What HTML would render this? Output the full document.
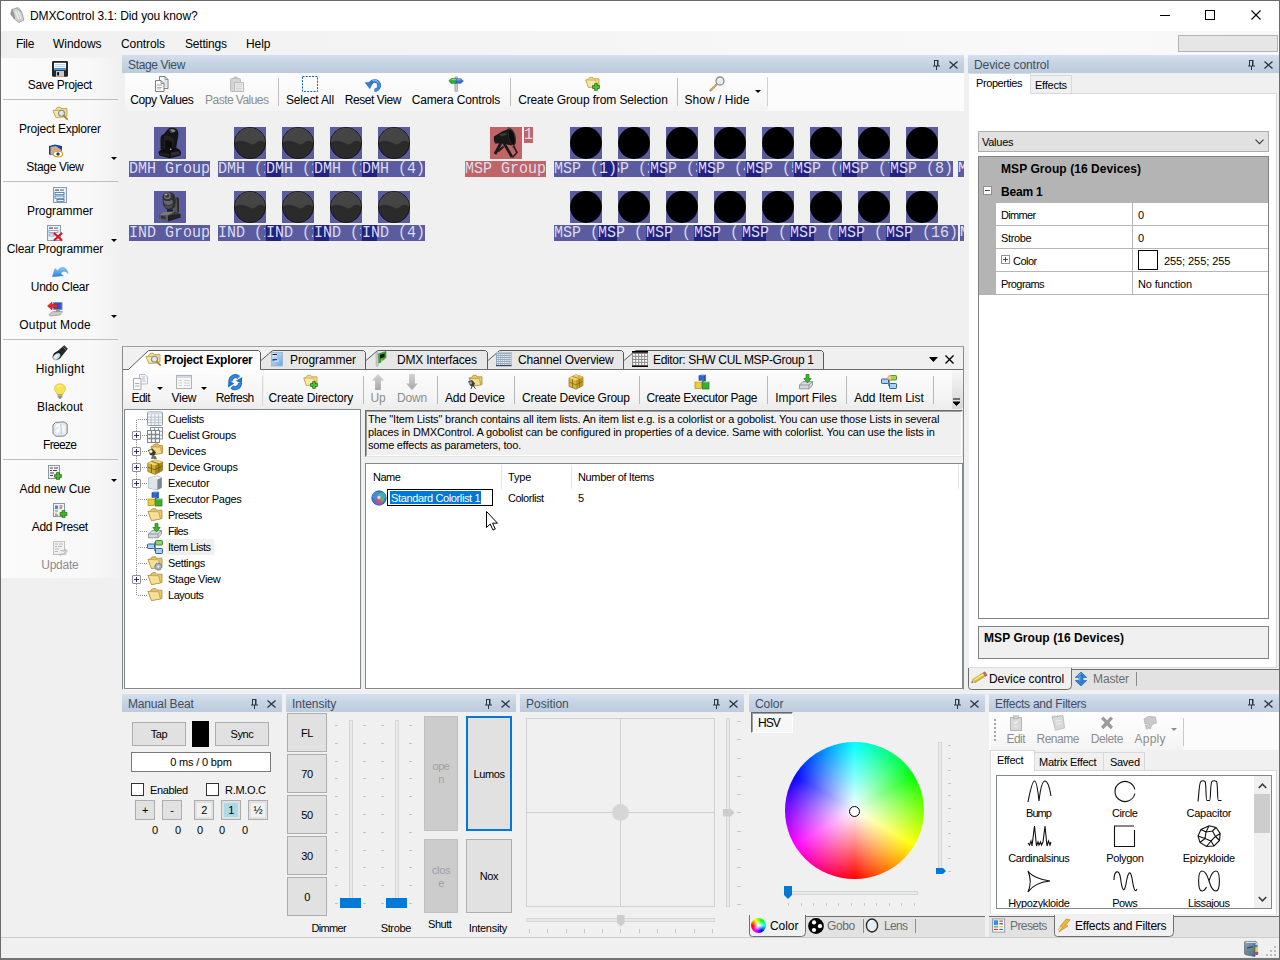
<!DOCTYPE html>
<html><head><meta charset="utf-8"><title>DMXControl 3.1: Did you know?</title>
<style>
*{box-sizing:border-box;margin:0;padding:0}
html,body{width:1280px;height:960px;overflow:hidden;background:#f0f0f0}
body{font-family:"Liberation Sans",sans-serif;font-size:12px;color:#000;position:relative}
.a{position:absolute}
svg{overflow:visible}
.t{position:absolute;white-space:nowrap;line-height:14px}
.ui{font-size:12px}
.ms{font-size:11px}
.ms.b{font-size:12px}
.c{text-align:center}
.b{font-weight:bold}
.dis{color:#8d8d8d}
.hdr{position:absolute;height:18px;background:linear-gradient(#d4e0ee,#c6d4e4 45%,#bccbdd)}
.dd{position:absolute;width:0;height:0;border-left:3px solid transparent;border-right:3px solid transparent;border-top:3px solid #000}
.btn{position:absolute;background:#e1e1e1;border:1px solid #adadad;text-align:center;font-size:11px;white-space:nowrap}
.lbl{position:absolute;height:16px;line-height:16px;text-align:center;color:#e6e6f2;font-family:"Liberation Mono",monospace;font-size:15px;white-space:pre;overflow:hidden;background:rgba(0,0,110,.62)}
.lbl{text-align:left}
.lbl span{display:block;transform:translateY(1.2px) scaleY(1.1);transform-origin:50% 60%;color:#dcdcf0}
</style></head><body>
<div class="a" style="left:0px;top:0px;width:1280px;height:960px;border:1px solid #6a6a6a;border-bottom:2px solid #747474;"></div>
<div class="a" style="left:1px;top:1px;width:1278px;height:30px;background:#fff"></div>
<svg class="a" style="left:9px;top:7px;" width="16" height="16" viewBox="0 0 16 16"><path d="M3 2.5 L7.5 1 L12.5 5 L15 13 L10 15.5 L5.5 12 Z" fill="#cfcfcf" stroke="#8b8b8b" stroke-width=".7"/><path d="M3 2.5 L5 8 L5.5 12 L1.5 7Z" fill="#9d9d9d" stroke="#777" stroke-width=".5"/><path d="M6.5 4 L9.5 12 M9 3.5 L12 11.5" stroke="#f3f3f3" stroke-width="1.2"/><path d="M7.5 1 L9.5 .8 L12.5 5" fill="none" stroke="#777" stroke-width=".7"/></svg>
<div class="t ui" style="left:30px;top:9px;letter-spacing:-0.112px;">DMXControl 3.1: Did you know?</div>
<div class="a" style="left:1160px;top:15px;width:10px;height:1px;background:#000"></div>
<div class="a" style="left:1205px;top:10px;width:10px;height:10px;border:1px solid #000"></div>
<svg class="a" style="left:1251px;top:10px" width="10" height="10" viewBox="0 0 10 10"><path d="M.5 .5 L9.5 9.5 M9.5 .5 L.5 9.5" stroke="#000" stroke-width="1.1" fill="none"/></svg>
<div class="a" style="left:1px;top:31px;width:1278px;height:27px;background:linear-gradient(90deg,#f0f0f0,#f2f2f2 15%,#f9f9f9 85%,#f7f7f7)"></div>
<div class="t ui" style="left:16px;top:37px;letter-spacing:-0.334px;">File</div>
<div class="t ui" style="left:53px;top:37px;letter-spacing:-0.025px;">Windows</div>
<div class="t ui" style="left:121px;top:37px;letter-spacing:-0.085px;">Controls</div>
<div class="t ui" style="left:185px;top:37px;letter-spacing:-0.201px;">Settings</div>
<div class="t ui" style="left:246px;top:37px;letter-spacing:-0.107px;">Help</div>
<div class="a" style="left:1178px;top:35px;width:100px;height:17px;background:#e6e6e6;border:1px solid #b4b4b4"></div>
<div class="a" style="left:1px;top:58px;width:119px;height:520px;background:linear-gradient(90deg,#fbfbfb,#f8f8f8 75%,#f1f1f1)"></div>
<svg class="a" style="left:52px;top:61px;" width="16" height="16" viewBox="0 0 16 16"><rect x="0" y="0" width="16" height="15.7" rx="1.3" fill="#262626"/><rect x="2" y="1.8" width="12" height="5.4" fill="#fff"/><rect x="3" y="3.2" width="10" height="1" fill="#a9cdee"/><rect x="3" y="5.2" width="10" height="1" fill="#a9cdee"/><rect x="2" y="7.2" width="12" height="2" fill="#4d9fe4"/><rect x="4" y="10" width="8" height="5.7" fill="#c9c9c9"/><rect x="5.2" y="11.2" width="1.8" height="3.2" fill="#000"/></svg>
<div class="t ui c" style="left:-40.17px;width:200px;top:78px;letter-spacing:-0.336px;">Save Project</div>
<svg class="a" style="left:52px;top:105px;" width="16" height="16" viewBox="0 0 16 16"><path d="M1 5.5 L3.5 5 L5 2.5 L8 2 L9 3.5 L15 3.5 L15 11 L4 12.5 Z" fill="#f0d98a" stroke="#b79a45" stroke-width=".8"/><path d="M1 5.5 L11 5.5 L13 12 L4 12.5Z" fill="#f6e6a4" stroke="#b79a45" stroke-width=".6"/><circle cx="9.5" cy="8.3" r="3" fill="#dbe9f4" stroke="#8a8a8a" stroke-width="1.1"/><path d="M11.8 10.8 L15.2 14.2" stroke="#b08236" stroke-width="1.8" stroke-linecap="round"/></svg>
<div class="t ui c" style="left:-40.12px;width:200px;top:122px;letter-spacing:-0.235px;">Project Explorer</div>
<svg class="a" style="left:47px;top:143px;" width="16" height="16" viewBox="0 0 16 16"><path d="M2 3 L8 1.5 L15 3 L15 11 L9 13 L2 11Z" fill="#1c3f9e"/><path d="M3 4 L9 3 L14.5 7 L14.5 11 L9 12.5 L3 11Z" fill="#c7ae9b"/><path d="M2 3 L3.5 4 L3.5 12.5 L2 11Z" fill="#3a3a46"/><ellipse cx="11" cy="11" rx="4.6" ry="2.9" fill="#fff" stroke="#e5a21f" stroke-width="1.2"/><circle cx="11" cy="11" r="1.7" fill="#2a4f8f"/><circle cx="11" cy="11" r=".8" fill="#111"/></svg>
<div class="t ui c" style="left:-45.17px;width:200px;top:160px;letter-spacing:-0.349px;">Stage View</div>
<div class="dd" style="left:111px;top:157px;border-top-color:#000"></div>
<svg class="a" style="left:52px;top:187px;" width="16" height="16" viewBox="0 0 16 16"><rect x="1.5" y=".5" width="13" height="15" fill="#e8f2fc" stroke="#8e9aa8"/><rect x="3" y="2.5" width="4" height="1.2" fill="#555"/><rect x="8" y="2.5" width="4" height="1.2" fill="#777"/><rect x="3" y="5.5" width="9" height="2.2" fill="#fff" stroke="#3b6ea5" stroke-width=".8"/><rect x="3" y="9" width="9" height="2.2" fill="#fff" stroke="#3b6ea5" stroke-width=".8"/><rect x="5" y="12.5" width="7" height="1.8" fill="#fff" stroke="#3b6ea5" stroke-width=".8"/></svg>
<div class="t ui c" style="left:-40.03px;width:200px;top:204px;letter-spacing:-0.068px;">Programmer</div>
<svg class="a" style="left:47px;top:225px;" width="16" height="16" viewBox="0 0 16 16"><rect x=".5" y=".5" width="13" height="15" fill="#e8f2fc" stroke="#8e9aa8"/><rect x="2" y="2.5" width="4" height="1.2" fill="#555"/><rect x="7" y="2.5" width="4" height="1.2" fill="#777"/><rect x="2" y="5.5" width="9" height="2" fill="#fff" stroke="#6f8eb0" stroke-width=".7"/><rect x="2" y="9" width="5" height="2" fill="#fff" stroke="#6f8eb0" stroke-width=".7"/><path d="M7.5 8.5 L14.5 15 M14.5 8.5 L7.5 15" stroke="#e0141c" stroke-width="2.2" stroke-linecap="round"/></svg>
<div class="t ui c" style="left:-45.08px;width:200px;top:242px;letter-spacing:-0.156px;">Clear Programmer</div>
<div class="dd" style="left:111px;top:239px;border-top-color:#000"></div>
<svg class="a" style="left:52px;top:263px;" width="16" height="16" viewBox="0 0 16 16"><defs><linearGradient id="undg" x1="0" y1="0" x2="0" y2="1"><stop offset="0" stop-color="#8cc8f6"/><stop offset="1" stop-color="#2c7fd2"/></linearGradient></defs><path d="M.3 13.8 L3 5.6 L5.6 7.8 C8.5 3.2 14.2 2.6 16 10.5 C13.5 7.2 10.8 7.8 8.8 10.6 L11.4 12.8 Z" fill="url(#undg)" stroke="#4a96dc" stroke-width=".5"/></svg>
<div class="t ui c" style="left:-40.12px;width:200px;top:280px;letter-spacing:-0.240px;">Undo Clear</div>
<svg class="a" style="left:47px;top:301px;" width="16" height="16" viewBox="0 0 16 16"><rect x="6" y="1" width="9.5" height="8" rx=".8" fill="#8e8e8e"/><rect x="7" y="2" width="7.5" height="6" fill="#2458d6"/><path d="M9 9 L13 9 L13.5 11 L8.5 11Z" fill="#9a9a9a"/><path d="M2 13.5 L6 10.5 L15.5 10.5 L13 14 L3 15Z" fill="#c9c9c9" stroke="#8a8a8a" stroke-width=".6"/><path d="M.5 5 L5 1 L5 3.2 L10.5 3.2 L10.5 6.8 L5 6.8 L5 9Z" fill="#e3262c" stroke="#a3151a" stroke-width=".5"/></svg>
<div class="t ui c" style="left:-44.89px;width:200px;top:318px;letter-spacing:0.211px;">Output Mode</div>
<div class="dd" style="left:111px;top:315px;border-top-color:#000"></div>
<svg class="a" style="left:52px;top:345px;" width="16" height="16" viewBox="0 0 16 16"><path d="M5 6.5 L12.3 .3 L15.8 3.8 L10 11Z" fill="#262626"/><path d="M12.8 1.2 L15 3.4 M11.4 2.4 L13.8 4.8" stroke="#8a8a8a" stroke-width=".9"/><path d="M7.2 5.4 L11 9.2" stroke="#555" stroke-width=".8"/><ellipse cx="5.4" cy="10.6" rx="5.4" ry="3.9" transform="rotate(-40 5.4 10.6)" fill="#1e1e1e"/><ellipse cx="4.7" cy="11.4" rx="4.1" ry="2.6" transform="rotate(-40 4.7 11.4)" fill="#c5ddee"/><ellipse cx="4" cy="11.4" rx="2" ry="1.2" transform="rotate(-40 4 11.4)" fill="#eef6fb"/></svg>
<div class="t ui c" style="left:-39.87px;width:200px;top:362px;letter-spacing:0.257px;">Highlight</div>
<svg class="a" style="left:52px;top:383px;" width="16" height="16" viewBox="0 0 16 16"><path d="M8 .8 C4.6 .8 2.6 3.2 2.6 5.8 C2.6 8.2 4.6 9.4 5.4 11.4 L10.6 11.4 C11.4 9.4 13.4 8.2 13.4 5.8 C13.4 3.2 11.4 .8 8 .8Z" fill="#f5e34d" stroke="#d9be2a" stroke-width=".7"/><path d="M5.5 4 C6.5 2.8 8.5 2.6 9.5 3.4" stroke="#fdf6b8" stroke-width="1.3" fill="none"/><rect x="5.6" y="11.4" width="4.8" height="3" fill="#8d8d8d"/><rect x="5.6" y="12.4" width="4.8" height=".8" fill="#c4c4c4"/><path d="M6.4 14.4 L9.6 14.4 L8.8 15.6 L7.2 15.6Z" fill="#444"/></svg>
<div class="t ui c" style="left:-40.01px;width:200px;top:400px;letter-spacing:-0.028px;">Blackout</div>
<svg class="a" style="left:52px;top:421px;" width="16" height="16" viewBox="0 0 16 16"><path d="M3.5 1.5 L12 .8 L15.2 3 L15.2 12 L12.5 15 L4 15.3 L1 12.5 L1 4Z" fill="#dfe7ec" stroke="#7b848b" stroke-width="1"/><path d="M4 3.5 L8 2.5 L9 9 L5 13 L3 10Z" fill="#f7fafc"/><path d="M10 4 L13 4.5 L13.5 11 L10.5 12.5Z" fill="#f3f7fa"/><path d="M8.5 3 L9.5 13 M3 9 L6.5 6" stroke="#b4c0c8" stroke-width=".7" fill="none"/></svg>
<div class="t ui c" style="left:-40.35px;width:200px;top:438px;letter-spacing:-0.691px;">Freeze</div>
<svg class="a" style="left:47px;top:465px;" width="16" height="16" viewBox="0 0 16 16"><rect x="1.5" y=".5" width="11" height="13" fill="#f4f4f4" stroke="#8a96a3"/><path d="M3 3h3M7 3h4M3 5.5h2M6 5.5h4M3 8h4M3 10.5h3" stroke="#444" stroke-width="1"/><path d="M11 7.2 v7.6 M7.2 11 h7.6" stroke="#1c6b12" stroke-width="3.6"/><path d="M11 7.8 v6.4 M7.8 11 h6.4" stroke="#46b42c" stroke-width="2.2"/></svg>
<div class="t ui c" style="left:-45.06px;width:200px;top:482px;letter-spacing:-0.113px;">Add new Cue</div>
<div class="dd" style="left:111px;top:479px;border-top-color:#000"></div>
<svg class="a" style="left:52px;top:503px;" width="16" height="16" viewBox="0 0 16 16"><rect x="1.5" y=".5" width="11" height="13" fill="#f4f4f4" stroke="#8a96a3"/><rect x="3" y="2.5" width="3" height="3.6" fill="#3c8fe6"/><path d="M7.5 3h3" stroke="#d33" stroke-width="1"/><path d="M7.5 5h2.5" stroke="#444" stroke-width="1"/><path d="M3 8h3" stroke="#3a3" stroke-width="1"/><path d="M3 10h2" stroke="#cc3" stroke-width="1"/><path d="M3 12h3" stroke="#d33" stroke-width="1"/><path d="M11.5 7.2 v7.6 M7.7 11 h7.6" stroke="#1c6b12" stroke-width="3.6"/><path d="M11.5 7.8 v6.4 M8.3 11 h6.4" stroke="#46b42c" stroke-width="2.2"/></svg>
<div class="t ui c" style="left:-40.17px;width:200px;top:520px;letter-spacing:-0.337px;">Add Preset</div>
<svg class="a" style="left:52px;top:541px;" width="16" height="16" viewBox="0 0 16 16"><rect x="1.5" y=".5" width="11" height="13" fill="#f1f1f1" stroke="#c0c0c0"/><path d="M3 3h3M7 3h4M3 5.5h2M6 5.5h4M3 8h4M3 10.5h3" stroke="#b5b5b5" stroke-width="1"/><path d="M8 9.5 L13.5 9.5 L13.5 8 L15.5 10 L13.5 12 M15 13 L8.5 13 L8.5 14.8 L7 12.8" fill="#d6d6d6" stroke="#bdbdbd" stroke-width="1"/></svg>
<div class="t ui c" style="left:-40.12px;width:200px;top:558px;letter-spacing:-0.232px;color:#8d8d8d">Update</div>
<div class="a" style="left:3px;top:99px;width:115px;height:1px;background:#bdbdbd"></div>
<div class="a" style="left:3px;top:181px;width:115px;height:1px;background:#bdbdbd"></div>
<div class="a" style="left:3px;top:339px;width:115px;height:1px;background:#bdbdbd"></div>
<div class="a" style="left:3px;top:459px;width:115px;height:1px;background:#bdbdbd"></div>
<div class="hdr" style="left:122px;top:55px;width:842px"></div><div class="t ui" style="left:128px;top:58px;letter-spacing:-0.349px;color:#3e4d60">Stage View</div><svg class="a" style="left:933px;top:60px" width="7" height="10" viewBox="0 0 7 10"><path d="M1.5 0 V6 M4.5 0 V6 M1 .5 H5 M0 6 H7 M3.5 6 V10" stroke="#2d3640" stroke-width="1" fill="none"/><path d="M4 0 H5.5 V6 H4Z" fill="#2d3640"/></svg><svg class="a" style="left:949px;top:61px" width="9" height="8" viewBox="0 0 9 8"><path d="M.5 .5 L8.5 7.5 M8.5 .5 L.5 7.5" stroke="#2d3640" stroke-width="1.3" fill="none"/></svg>
<div class="a" style="left:125px;top:73px;width:839px;height:38px;background:#fcfcfc;border-radius:2px 0 0 0"></div>
<div class="a" style="left:125px;top:73px;width:643px;height:38px;background:linear-gradient(#fdfdfd,#f9f9f9 60%,#f3f3f3);border-radius:2px 0 3px 0"></div>
<svg class="a" style="left:154px;top:76px;" width="16" height="16" viewBox="0 0 16 16"><path d="M5.5 .5 h5.5 l3 3 v9 h-8.5z" fill="#f4f7fa" stroke="#7e7e7e"/><path d="M11 .5 v3 h3" fill="none" stroke="#7e7e7e" stroke-width=".8"/><path d="M9.5 4h3M9.5 6h3.5M10.5 8h2.5M10.5 10h2.5" stroke="#b9c6d6" stroke-width=".8"/><path d="M1.5 4.5 h5.5 l3 3 v8 h-8.5z" fill="#fcfcfc" stroke="#7e7e7e"/><path d="M7 4.5 v3 h3" fill="none" stroke="#7e7e7e" stroke-width=".8"/><path d="M3 9h5" stroke="#8a8a8a" stroke-width=".8"/><path d="M3 11.5h5M3 13h4" stroke="#b5b5b5" stroke-width="1"/></svg>
<div class="t ui c" style="left:61.82px;width:200px;top:93px;letter-spacing:-0.354px;">Copy Values</div>
<svg class="a" style="left:229px;top:76px;" width="16" height="16" viewBox="0 0 16 16"><rect x="1.5" y="2.5" width="10" height="13" rx="1" fill="#d4d4d4" stroke="#bcbcbc"/><path d="M4 2.8 C4 1 5.5 .6 6.5 .6 C7.5 .6 9 1 9 2.8Z" fill="#c4c4c4"/><rect x="5.5" y="6.5" width="9" height="9" fill="#e9e9e9" stroke="#bdbdbd"/><path d="M7 8.5h6M7 10.5h6M7 12.5h6M7 14h6" stroke="#cfcfcf" stroke-width=".8"/></svg>
<div class="t ui c" style="left:136.73px;width:200px;top:93px;letter-spacing:-0.548px;color:#8d8d8d">Paste Values</div>
<svg class="a" style="left:302px;top:76px;" width="16" height="16" viewBox="0 0 16 16"><rect x=".5" y=".5" width="15" height="15" fill="none" stroke="#1b5fb0" stroke-width="1" stroke-dasharray="2 1.2"/></svg>
<div class="t ui c" style="left:209.93px;width:200px;top:93px;letter-spacing:-0.136px;">Select All</div>
<svg class="a" style="left:365px;top:76px;" width="16" height="16" viewBox="0 0 16 16"><path d="M5.2 8.2 A4.6 4.6 0 1 1 9.6 14.2" fill="none" stroke="#1d62b8" stroke-width="3.6"/><path d="M5.2 8.2 A4.6 4.6 0 1 1 9.6 14.2" fill="none" stroke="#3f8fe2" stroke-width="2.4"/><path d="M7.5 4.4 A4 4 0 0 1 13.2 7" fill="none" stroke="#9ccbf5" stroke-width="1"/><path d="M.3 6.8 L8 6.2 L4.8 12.6Z" fill="#2f7fd8" stroke="#1d62b8" stroke-width=".6"/></svg>
<div class="t ui c" style="left:272.79px;width:200px;top:93px;letter-spacing:-0.422px;">Reset View</div>
<svg class="a" style="left:448px;top:76px;" width="16" height="16" viewBox="0 0 16 16"><rect x="6.9" y=".8" width="2.6" height="14.8" rx=".8" fill="#c9c9c9" stroke="#8a8a8a" stroke-width=".6"/><path d="M.8 5 L3 2.6 L8.3 2.6 L8.3 7.4 L3 7.4Z" fill="#2fae38" stroke="#1b8a24" stroke-width=".6"/><path d="M8.3 2.8 L13 2.8 L15.4 5 L13 7.2 L8.3 7.2Z" fill="#3a6fd8" stroke="#2450a8" stroke-width=".6"/><path d="M3.2 3.6 H8 M8.6 3.8 H12.8" stroke="#9fe3a5" stroke-width=".8"/></svg>
<div class="t ui c" style="left:355.93px;width:200px;top:93px;letter-spacing:-0.146px;">Camera Controls</div>
<svg class="a" style="left:585px;top:76px;" width="16" height="16" viewBox="0 0 16 16"><path d="M.8 4 L3 3.6 L4.5 1.5 L7.5 1.2 L8.5 2.8 L14 2.8 L14 10 L3.5 11.5 Z" fill="#f0d98a" stroke="#b79a45" stroke-width=".8"/><path d="M.8 4 L10.5 4.2 L12.5 10.5 L3.5 11.5Z" fill="#f7e8a8" stroke="#b79a45" stroke-width=".6"/><path d="M11 7.2 v7.6 M7.2 11 h7.6" stroke="#1c6b12" stroke-width="3.4"/><path d="M11 7.9 v6.2 M7.9 11 h6.2" stroke="#49c02d" stroke-width="2"/></svg>
<div class="t ui c" style="left:492.94px;width:200px;top:93px;letter-spacing:-0.116px;">Create Group from Selection</div>
<svg class="a" style="left:709px;top:76px;" width="16" height="16" viewBox="0 0 16 16"><path d="M1.5 14.5 L8 8" stroke="#b98b4e" stroke-width="2.2" stroke-linecap="round"/><path d="M1.8 14.2 L8 8" stroke="#e1bc82" stroke-width=".8" stroke-linecap="round"/><circle cx="11" cy="5" r="4" fill="#e4ecf2" stroke="#8d8d8d" stroke-width="1.3"/><path d="M8.8 4 C9.5 2.6 11 2.2 12.5 2.8" stroke="#fff" stroke-width="1" fill="none"/></svg>
<div class="t ui c" style="left:617.01px;width:200px;top:93px;letter-spacing:0.027px;">Show / Hide</div>
<div class="a" style="left:278px;top:78px;width:1px;height:28px;background:#bdbdbd"></div>
<div class="a" style="left:510px;top:78px;width:1px;height:28px;background:#bdbdbd"></div>
<div class="a" style="left:677px;top:78px;width:1px;height:28px;background:#bdbdbd"></div>
<div class="a" style="left:767px;top:77px;width:1px;height:29px;background:#d0d0d0"></div>
<div class="dd" style="left:755px;top:90px;border-top-color:#000"></div>
<svg class="a" style="left:154px;top:127px" width="32" height="32" viewBox="0 0 32 32"><rect width="32" height="32" fill="#5b5b9f"/><path d="M6.5 22 L6.5 12 C6.5 9 8 7.5 10 7 L14 2 C16 .3 21 .3 23 2.5 C25 5 24.5 10 23.5 13 L22.5 19 L22 23 Z" fill="#141414"/><path d="M14.5 2.5 C17 1.2 20.5 1.5 22 3.5 C21 5.5 18 6.5 16.5 6 Z" fill="#3c3c3c"/><ellipse cx="18.8" cy="3.6" rx="2.2" ry="1.2" transform="rotate(20 18.8 3.6)" fill="#8c8c8c"/><path d="M10 9 C13 7.5 18 9 20 13 L19.5 20 L9.5 21Z" fill="#222"/><path d="M11 14 C13 12 17 13 18.5 16 L18 20.5 L11.5 21Z" fill="#0c0c0c"/><path d="M4.5 25 L7 22.5 L11 21.5 L22 21 L25.5 22.5 L27 25 L26.5 28.5 L17 31 L15.5 31.2 L5.5 28.5Z" fill="#0f0f0f"/><path d="M17 25.5 L25.5 24 L25.5 27.5 L17 29.5Z" fill="#2c2c34"/><path d="M6 25.3 L15.5 27 L15.5 30 L6 27.8Z" fill="#1e1e1e"/><circle cx="16.8" cy="22.3" r=".7" fill="#d0d0d0"/></svg>
<div class="lbl" style="left:129px;top:161px;width:81px;"><span style="">DMH Group</span></div>
<svg class="a" style="left:154px;top:191px" width="32" height="32" viewBox="0 0 32 32"><rect width="32" height="32" fill="#5b5b9f"/><path d="M20 7 L24 6 L25 8 L25 21 L21 23 L19.5 21Z" fill="#55565a"/><path d="M22.5 6.5 L24 6 L25 8 L25 21 L23.5 21.8Z" fill="#2a2a2c"/><path d="M8.5 6 C8.5 3 11 1 14 1 C17.5 1 20 2.5 21 5 L22 10 L21 16 L17.5 18.5 L12 18 L9 14Z" fill="#2f2f31"/><circle cx="13.3" cy="4.8" r="3.5" fill="#6f7074"/><circle cx="13" cy="4.5" r="2.3" fill="#3a3340"/><ellipse cx="12.2" cy="3.6" rx="1.3" ry=".9" fill="#b89ac6"/><path d="M9.5 8.5 C11.5 10.5 15.5 10.5 18 8.5 L19 12 C16 14.5 12 14.5 10 12Z" fill="#66676b"/><path d="M10.5 13 C12.5 15 16 15 18.5 13 L18 16.5 C16 18 13 18 11.5 16.5Z" fill="#4a4b4f"/><path d="M13 18 L19 18.5 L19 21 L13 21Z" fill="#1d1d1f"/><path d="M5.5 24 L9 21 L21 20.5 L26.5 23 L26.5 26.5 L14 30.5 L5.5 27.5Z" fill="#3a3b3e"/><path d="M5.5 24 L9 21 L21 20.5 L14 24.5Z" fill="#77787c"/><path d="M5.5 24 L14 24.5 L14 30.5 L5.5 27.5Z" fill="#5a5b5f"/><path d="M7 25 L11.5 25.4 L11.5 28.3 L7 27Z" fill="#2b2f2b"/><path d="M14 24.5 L26.5 23 L26.5 26.5 L14 30.5Z" fill="#232325"/></svg>
<div class="lbl" style="left:129px;top:225px;width:81px;"><span style="">IND Group</span></div>
<svg class="a" style="left:234px;top:127px" width="32" height="32" viewBox="0 0 32 32"><rect width="32" height="32" fill="#5b5b9f"/><circle cx="16" cy="16" r="15.6" fill="#2b2b2b" stroke="#0e0e0e" stroke-width=".8"/><path d="M.8 16 A15.2 15.2 0 0 1 31.2 16 C29 13.5 26 13 23.5 14.5 C21.5 16 19.5 18.5 17 17 C14.5 15.5 13 15.5 10.5 14.5 C7 13 3.5 13.5 .8 16Z" fill="#454545"/></svg>
<svg class="a" style="left:234px;top:191px" width="32" height="32" viewBox="0 0 32 32"><rect width="32" height="32" fill="#5b5b9f"/><circle cx="16" cy="16" r="15.6" fill="#2b2b2b" stroke="#0e0e0e" stroke-width=".8"/><path d="M.8 16 A15.2 15.2 0 0 1 31.2 16 C29 13.5 26 13 23.5 14.5 C21.5 16 19.5 18.5 17 17 C14.5 15.5 13 15.5 10.5 14.5 C7 13 3.5 13.5 .8 16Z" fill="#454545"/></svg>
<svg class="a" style="left:282px;top:127px" width="32" height="32" viewBox="0 0 32 32"><rect width="32" height="32" fill="#5b5b9f"/><circle cx="16" cy="16" r="15.6" fill="#2b2b2b" stroke="#0e0e0e" stroke-width=".8"/><path d="M.8 16 A15.2 15.2 0 0 1 31.2 16 C29 13.5 26 13 23.5 14.5 C21.5 16 19.5 18.5 17 17 C14.5 15.5 13 15.5 10.5 14.5 C7 13 3.5 13.5 .8 16Z" fill="#454545"/></svg>
<svg class="a" style="left:282px;top:191px" width="32" height="32" viewBox="0 0 32 32"><rect width="32" height="32" fill="#5b5b9f"/><circle cx="16" cy="16" r="15.6" fill="#2b2b2b" stroke="#0e0e0e" stroke-width=".8"/><path d="M.8 16 A15.2 15.2 0 0 1 31.2 16 C29 13.5 26 13 23.5 14.5 C21.5 16 19.5 18.5 17 17 C14.5 15.5 13 15.5 10.5 14.5 C7 13 3.5 13.5 .8 16Z" fill="#454545"/></svg>
<svg class="a" style="left:330px;top:127px" width="32" height="32" viewBox="0 0 32 32"><rect width="32" height="32" fill="#5b5b9f"/><circle cx="16" cy="16" r="15.6" fill="#2b2b2b" stroke="#0e0e0e" stroke-width=".8"/><path d="M.8 16 A15.2 15.2 0 0 1 31.2 16 C29 13.5 26 13 23.5 14.5 C21.5 16 19.5 18.5 17 17 C14.5 15.5 13 15.5 10.5 14.5 C7 13 3.5 13.5 .8 16Z" fill="#454545"/></svg>
<svg class="a" style="left:330px;top:191px" width="32" height="32" viewBox="0 0 32 32"><rect width="32" height="32" fill="#5b5b9f"/><circle cx="16" cy="16" r="15.6" fill="#2b2b2b" stroke="#0e0e0e" stroke-width=".8"/><path d="M.8 16 A15.2 15.2 0 0 1 31.2 16 C29 13.5 26 13 23.5 14.5 C21.5 16 19.5 18.5 17 17 C14.5 15.5 13 15.5 10.5 14.5 C7 13 3.5 13.5 .8 16Z" fill="#454545"/></svg>
<svg class="a" style="left:378px;top:127px" width="32" height="32" viewBox="0 0 32 32"><rect width="32" height="32" fill="#5b5b9f"/><circle cx="16" cy="16" r="15.6" fill="#2b2b2b" stroke="#0e0e0e" stroke-width=".8"/><path d="M.8 16 A15.2 15.2 0 0 1 31.2 16 C29 13.5 26 13 23.5 14.5 C21.5 16 19.5 18.5 17 17 C14.5 15.5 13 15.5 10.5 14.5 C7 13 3.5 13.5 .8 16Z" fill="#454545"/></svg>
<svg class="a" style="left:378px;top:191px" width="32" height="32" viewBox="0 0 32 32"><rect width="32" height="32" fill="#5b5b9f"/><circle cx="16" cy="16" r="15.6" fill="#2b2b2b" stroke="#0e0e0e" stroke-width=".8"/><path d="M.8 16 A15.2 15.2 0 0 1 31.2 16 C29 13.5 26 13 23.5 14.5 C21.5 16 19.5 18.5 17 17 C14.5 15.5 13 15.5 10.5 14.5 C7 13 3.5 13.5 .8 16Z" fill="#454545"/></svg>
<div class="lbl" style="left:218px;top:161px;width:63px;"><span style="width:47px;overflow:hidden;">DMH (1)</span></div>
<div class="lbl" style="left:218px;top:225px;width:63px;"><span style="width:47px;overflow:hidden;">IND (1)</span></div>
<div class="lbl" style="left:266px;top:161px;width:63px;"><span style="width:47px;overflow:hidden;">DMH (2)</span></div>
<div class="lbl" style="left:266px;top:225px;width:63px;"><span style="width:47px;overflow:hidden;">IND (2)</span></div>
<div class="lbl" style="left:314px;top:161px;width:63px;"><span style="width:47px;overflow:hidden;">DMH (3)</span></div>
<div class="lbl" style="left:314px;top:225px;width:63px;"><span style="width:47px;overflow:hidden;">IND (3)</span></div>
<div class="lbl" style="left:362px;top:161px;width:63px;"><span style="">DMH (4)</span></div>
<div class="lbl" style="left:362px;top:225px;width:63px;"><span style="">IND (4)</span></div>
<svg class="a" style="left:490px;top:127px" width="32" height="32" viewBox="0 0 32 32"><rect width="32" height="32" fill="#c06468"/><path d="M17.5 .8 C20.5 .5 24.5 4 25.2 10 C25.8 15 24.5 19.5 22.5 20.5" fill="none" stroke="#3c3c3c" stroke-width="1.2"/><path d="M4 9.5 L12 4.5 L18.5 2 C22 3 24.5 7 24.5 11.5 C24.5 15 23.5 17.5 21.5 18.5 L12.5 16.5 L5 16.5 C3.8 14 3.6 11.5 4 9.5Z" fill="#181818"/><path d="M10 7 L16.5 5.5 L16.5 8 L10 9.5Z" fill="#3a3a3a"/><ellipse cx="21.8" cy="10.3" rx="3" ry="8" transform="rotate(-14 21.8 10.3)" fill="#0c0c0c" stroke="#2e2e2e" stroke-width=".8"/><path d="M11.5 15 L5 27" stroke="#1a1a1a" stroke-width="2.8"/><path d="M8 24.5 L13.5 19.5" stroke="#1a1a1a" stroke-width="2"/><path d="M13.5 15.5 L22 30" stroke="#1a1a1a" stroke-width="2.8"/><path d="M23.5 19 L27 25.5 L22.5 30.5" fill="none" stroke="#222" stroke-width="1.6"/></svg>
<div class="lbl" style="left:465px;top:161px;width:81px;background:#c06468;"><span style="">MSP Group</span></div>
<div class="lbl" style="left:524px;top:127px;width:9px;background:#c06468"><span>1</span></div>
<svg class="a" style="left:570px;top:127px" width="32" height="32" viewBox="0 0 32 32"><rect width="32" height="32" fill="#5b5b9f"/><circle cx="16" cy="16" r="15.9" fill="#000"/></svg>
<svg class="a" style="left:570px;top:191px" width="32" height="32" viewBox="0 0 32 32"><rect width="32" height="32" fill="#5b5b9f"/><circle cx="16" cy="16" r="15.9" fill="#000"/></svg>
<svg class="a" style="left:618px;top:127px" width="32" height="32" viewBox="0 0 32 32"><rect width="32" height="32" fill="#5b5b9f"/><circle cx="16" cy="16" r="15.9" fill="#000"/></svg>
<svg class="a" style="left:618px;top:191px" width="32" height="32" viewBox="0 0 32 32"><rect width="32" height="32" fill="#5b5b9f"/><circle cx="16" cy="16" r="15.9" fill="#000"/></svg>
<svg class="a" style="left:666px;top:127px" width="32" height="32" viewBox="0 0 32 32"><rect width="32" height="32" fill="#5b5b9f"/><circle cx="16" cy="16" r="15.9" fill="#000"/></svg>
<svg class="a" style="left:666px;top:191px" width="32" height="32" viewBox="0 0 32 32"><rect width="32" height="32" fill="#5b5b9f"/><circle cx="16" cy="16" r="15.9" fill="#000"/></svg>
<svg class="a" style="left:714px;top:127px" width="32" height="32" viewBox="0 0 32 32"><rect width="32" height="32" fill="#5b5b9f"/><circle cx="16" cy="16" r="15.9" fill="#000"/></svg>
<svg class="a" style="left:714px;top:191px" width="32" height="32" viewBox="0 0 32 32"><rect width="32" height="32" fill="#5b5b9f"/><circle cx="16" cy="16" r="15.9" fill="#000"/></svg>
<svg class="a" style="left:762px;top:127px" width="32" height="32" viewBox="0 0 32 32"><rect width="32" height="32" fill="#5b5b9f"/><circle cx="16" cy="16" r="15.9" fill="#000"/></svg>
<svg class="a" style="left:762px;top:191px" width="32" height="32" viewBox="0 0 32 32"><rect width="32" height="32" fill="#5b5b9f"/><circle cx="16" cy="16" r="15.9" fill="#000"/></svg>
<svg class="a" style="left:810px;top:127px" width="32" height="32" viewBox="0 0 32 32"><rect width="32" height="32" fill="#5b5b9f"/><circle cx="16" cy="16" r="15.9" fill="#000"/></svg>
<svg class="a" style="left:810px;top:191px" width="32" height="32" viewBox="0 0 32 32"><rect width="32" height="32" fill="#5b5b9f"/><circle cx="16" cy="16" r="15.9" fill="#000"/></svg>
<svg class="a" style="left:858px;top:127px" width="32" height="32" viewBox="0 0 32 32"><rect width="32" height="32" fill="#5b5b9f"/><circle cx="16" cy="16" r="15.9" fill="#000"/></svg>
<svg class="a" style="left:858px;top:191px" width="32" height="32" viewBox="0 0 32 32"><rect width="32" height="32" fill="#5b5b9f"/><circle cx="16" cy="16" r="15.9" fill="#000"/></svg>
<svg class="a" style="left:906px;top:127px" width="32" height="32" viewBox="0 0 32 32"><rect width="32" height="32" fill="#5b5b9f"/><circle cx="16" cy="16" r="15.9" fill="#000"/></svg>
<svg class="a" style="left:906px;top:191px" width="32" height="32" viewBox="0 0 32 32"><rect width="32" height="32" fill="#5b5b9f"/><circle cx="16" cy="16" r="15.9" fill="#000"/></svg>
<div class="lbl" style="left:554px;top:225px;width:63px;"><span style="width:44px;overflow:hidden;">MSP (9)</span></div>
<div class="lbl" style="left:602px;top:161px;width:63px;"><span style="width:47px;overflow:hidden;clip-path:inset(0 0 0 16px);">MSP (2)</span></div>
<div class="lbl" style="left:598px;top:225px;width:72px;"><span style="width:45px;overflow:hidden;">MSP (10)</span></div>
<div class="lbl" style="left:650px;top:161px;width:63px;"><span style="width:47px;overflow:hidden;">MSP (3)</span></div>
<div class="lbl" style="left:646px;top:225px;width:72px;"><span style="width:45px;overflow:hidden;">MSP (11)</span></div>
<div class="lbl" style="left:698px;top:161px;width:63px;"><span style="width:47px;overflow:hidden;">MSP (4)</span></div>
<div class="lbl" style="left:694px;top:225px;width:72px;"><span style="width:45px;overflow:hidden;">MSP (12)</span></div>
<div class="lbl" style="left:746px;top:161px;width:63px;"><span style="width:47px;overflow:hidden;">MSP (5)</span></div>
<div class="lbl" style="left:742px;top:225px;width:72px;"><span style="width:45px;overflow:hidden;">MSP (13)</span></div>
<div class="lbl" style="left:794px;top:161px;width:63px;"><span style="width:47px;overflow:hidden;">MSP (6)</span></div>
<div class="lbl" style="left:790px;top:225px;width:72px;"><span style="width:45px;overflow:hidden;">MSP (14)</span></div>
<div class="lbl" style="left:842px;top:161px;width:63px;"><span style="width:47px;overflow:hidden;">MSP (7)</span></div>
<div class="lbl" style="left:838px;top:225px;width:72px;"><span style="width:45px;overflow:hidden;">MSP (15)</span></div>
<div class="lbl" style="left:890px;top:161px;width:63px;"><span style="">MSP (8)</span></div>
<div class="lbl" style="left:886px;top:225px;width:72px;"><span style="">MSP (16)</span></div>
<div class="lbl" style="left:554px;top:161px;width:63px;"><span style="">MSP (1)</span></div>
<div class="lbl" style="left:958px;top:161px;width:6px;text-align:left">M</div>
<div class="lbl" style="left:960px;top:225px;width:4px;text-align:left">M</div>
<div class="hdr" style="left:968px;top:55px;width:311px"></div><div class="t ui" style="left:974px;top:58px;letter-spacing:-0.074px;color:#3e4d60">Device control</div><svg class="a" style="left:1248px;top:60px" width="7" height="10" viewBox="0 0 7 10"><path d="M1.5 0 V6 M4.5 0 V6 M1 .5 H5 M0 6 H7 M3.5 6 V10" stroke="#2d3640" stroke-width="1" fill="none"/><path d="M4 0 H5.5 V6 H4Z" fill="#2d3640"/></svg><svg class="a" style="left:1264px;top:61px" width="9" height="8" viewBox="0 0 9 8"><path d="M.5 .5 L8.5 7.5 M8.5 .5 L.5 7.5" stroke="#2d3640" stroke-width="1.3" fill="none"/></svg>
<div class="a" style="left:969px;top:93px;width:308px;height:575px;background:#fff;border:1px solid #dcdcdc;border-left:none"></div>
<div class="a" style="left:1030px;top:75px;width:42px;height:19px;background:#f0f0f0;border:1px solid #d9d9d9"></div>
<div class="a" style="left:969px;top:73px;width:62px;height:21px;background:#fff;border:1px solid #dcdcdc;border-bottom:none;border-left:none"></div>
<div class="t ms" style="left:976px;top:76px;letter-spacing:-0.413px;">Properties</div>
<div class="t ms" style="left:1035px;top:78px;letter-spacing:-0.218px;">Effects</div>
<div class="a" style="left:978px;top:131px;width:291px;height:21px;background:#e1e1e1;border:1px solid #adadad"></div>
<div class="t ms" style="left:982px;top:135px;letter-spacing:-0.261px;">Values</div>
<svg class="a" style="left:1255px;top:139px" width="9" height="6" viewBox="0 0 9 6"><path d="M.5 .7 L4.5 4.7 L8.5 .7" stroke="#3a3a3a" stroke-width="1.1" fill="none"/></svg>
<div class="a" style="left:978px;top:156px;width:291px;height:463px;background:#fff;border:1px solid #828282"></div>
<div class="a" style="left:979px;top:157px;width:289px;height:46px;background:#b4b4b4"></div>
<div class="a" style="left:979px;top:203px;width:17px;height:92px;background:#b4b4b4"></div>
<div class="t ms b" style="left:1001px;top:162px;letter-spacing:0.068px;">MSP Group (16 Devices)</div>
<div class="t ms b" style="left:1001px;top:185px;letter-spacing:-0.198px;">Beam 1</div>
<div class="a" style="left:983px;top:186px;width:9px;height:9px;background:#fff;border:1px solid #919191"></div>
<div class="a" style="left:985px;top:190px;width:5px;height:1px;background:#4a4a4a"></div>
<div class="a" style="left:996px;top:225px;width:272px;height:1px;background:#b6b6b6"></div>
<div class="t ms" style="left:1001px;top:208px;letter-spacing:-0.666px;">Dimmer</div>
<div class="t ms" style="left:1138px;top:208px;letter-spacing:-0.428px;">0</div>
<div class="a" style="left:996px;top:248px;width:272px;height:1px;background:#b6b6b6"></div>
<div class="t ms" style="left:1001px;top:231px;letter-spacing:-0.368px;">Strobe</div>
<div class="t ms" style="left:1138px;top:231px;letter-spacing:-0.428px;">0</div>
<div class="a" style="left:996px;top:271px;width:272px;height:1px;background:#b6b6b6"></div>
<div class="t ms" style="left:1013px;top:254px;letter-spacing:-0.507px;">Color</div>
<div class="a" style="left:996px;top:294px;width:272px;height:1px;background:#b6b6b6"></div>
<div class="t ms" style="left:1001px;top:277px;letter-spacing:-0.585px;">Programs</div>
<div class="t ms" style="left:1138px;top:277px;letter-spacing:-0.149px;">No function</div>
<div class="a" style="left:1132px;top:203px;width:1px;height:92px;background:#b6b6b6"></div>
<div class="a" style="left:1001px;top:255px;width:9px;height:9px;background:#fff;border:1px solid #919191"></div>
<div class="a" style="left:1003px;top:259px;width:5px;height:1px;background:#3a4a8a"></div>
<div class="a" style="left:1005px;top:257px;width:1px;height:5px;background:#3a4a8a"></div>
<div class="a" style="left:1138px;top:250px;width:20px;height:20px;background:#fff;border:1px solid #000"></div>
<div class="t ms" style="left:1164px;top:254px;letter-spacing:-0.079px;">255; 255; 255</div>
<div class="a" style="left:978px;top:626px;width:291px;height:33px;background:#f0f0f0;border:1px solid #828282"></div>
<div class="t ms b" style="left:984px;top:631px;letter-spacing:0.068px;">MSP Group (16 Devices)</div>
<div class="a" style="left:969px;top:670px;width:310px;height:20px;background:#e2e2e2"></div><div class="a" style="left:1072px;top:669px;width:207px;height:1px;background:#707070"></div><svg class="a" style="left:968px;top:668px" width="105" height="23" viewBox="0 0 105 23"><path d="M.5 0 V18.5 Q.5 21.5 3.5 21.5 H99.5 Q103.5 21.5 103.5 17.5 V0" fill="#f0f0f0" stroke="#6e6e6e"/></svg>
<svg class="a" style="left:971px;top:670px;" width="16" height="16" viewBox="0 0 16 16"><path d="M2 9.2 L12.25 2.85 L14.35 6.25 L4.1 12.6Z" fill="#efd24a" stroke="#a88a22" stroke-width=".6"/><path d="M2.8 10.2 L13 3.9" stroke="#fbeea0" stroke-width="1"/><path d="M3.6 11.8 L13.9 5.4" stroke="#c9a82e" stroke-width=".9"/><path d="M12.25 2.85 L13.95 1.8 L16.05 5.2 L14.35 6.25Z" fill="#d86a6a" stroke="#9a3a3a" stroke-width=".5"/><path d="M.4 12.6 L2 9.2 L4.1 12.6Z" fill="#ecd6aa" stroke="#a88a22" stroke-width=".4"/><path d="M.4 12.6 L1.2 11.1 L2 12.55Z" fill="#333"/></svg>
<div class="t ui" style="left:989px;top:672px;letter-spacing:-0.074px;">Device control</div>
<svg class="a" style="left:1074px;top:671px;" width="14" height="16" viewBox="0 0 16 16"><path d="M8 0 L14.5 6.2 L10.3 6.2 L10.3 9.8 L14.5 9.8 L8 16 L1.5 9.8 L5.7 9.8 L5.7 6.2 L1.5 6.2Z" fill="#2f7fd6" stroke="#1a5ba8" stroke-width=".7"/><path d="M8 1.6 L4.2 5.2 M6.6 5 L6.6 10" stroke="#8cc2f3" stroke-width="1" fill="none"/></svg>
<div class="t ui" style="left:1093px;top:672px;letter-spacing:-0.112px;color:#6d6d6d">Master</div>
<div class="a" style="left:1136px;top:672px;width:1px;height:14px;background:#8c8c8c"></div>
<div class="a" style="left:122px;top:346px;width:842px;height:344px;border:1px solid #8a8a8a;border-top-color:#a0a0a0;border-bottom-color:#f8f8f8;background:#f0f0f0"></div>
<svg class="a" style="left:0;top:0" width="1280" height="380" viewBox="0 0 1280 380"><path d="M613.5 369.5 L635.0 351 Q635.5 350.5 637.0 350.5 H821.5 L823.5 352.5 V369.5" fill="#e7e7e7" stroke="#5a5a5a" stroke-width="1"/><path d="M477.5 369.5 L499.0 351 Q499.5 350.5 501.0 350.5 H621.5 L623.5 352.5 V369.5" fill="#e7e7e7" stroke="#5a5a5a" stroke-width="1"/><path d="M355.5 369.5 L377.0 351 Q377.5 350.5 379.0 350.5 H485.5 L487.5 352.5 V369.5" fill="#e7e7e7" stroke="#5a5a5a" stroke-width="1"/><path d="M250.5 369.5 L272.0 351 Q272.5 350.5 274.0 350.5 H363.5 L365.5 352.5 V369.5" fill="#e7e7e7" stroke="#5a5a5a" stroke-width="1"/><path d="M123 369.5 H963" stroke="#6a6a6a"/><path d="M128.5 369.5 L148.0 351 Q148.5 350.5 150.0 350.5 H258.5 L260.5 352.5 V369.5" fill="#fff" stroke="#5a5a5a" stroke-width="1"/><path d="M129 369.5 H260" stroke="#fff" stroke-width="1.2"/></svg>
<svg class="a" style="left:632px;top:351px;" width="16" height="16" viewBox="0 0 16 16"><rect x="0" y="0" width="16" height="16" fill="#8f8f8f"/><rect x="0" y="0" width="16" height="1.6" fill="#000"/><rect x="0" y="14.6" width="16" height="1.4" fill="#000"/><g fill="#fff"><rect x="1.2" y="3.0" width="1.9" height="1.9"/><rect x="4.2" y="3.0" width="1.9" height="1.9"/><rect x="7.2" y="3.0" width="1.9" height="1.9"/><rect x="10.2" y="3.0" width="1.9" height="1.9"/><rect x="13.2" y="3.0" width="1.9" height="1.9"/><rect x="1.2" y="6.0" width="1.9" height="1.9"/><rect x="4.2" y="6.0" width="1.9" height="1.9"/><rect x="7.2" y="6.0" width="1.9" height="1.9"/><rect x="10.2" y="6.0" width="1.9" height="1.9"/><rect x="13.2" y="6.0" width="1.9" height="1.9"/><rect x="1.2" y="9.0" width="1.9" height="1.9"/><rect x="4.2" y="9.0" width="1.9" height="1.9"/><rect x="7.2" y="9.0" width="1.9" height="1.9"/><rect x="10.2" y="9.0" width="1.9" height="1.9"/><rect x="13.2" y="9.0" width="1.9" height="1.9"/><rect x="1.2" y="12.0" width="1.9" height="1.9"/><rect x="4.2" y="12.0" width="1.9" height="1.9"/><rect x="7.2" y="12.0" width="1.9" height="1.9"/><rect x="10.2" y="12.0" width="1.9" height="1.9"/><rect x="13.2" y="12.0" width="1.9" height="1.9"/></g></svg>
<div class="t ui" style="left:653px;top:353px;letter-spacing:-0.334px;">Editor: SHW CUL MSP-Group 1</div>
<svg class="a" style="left:496px;top:351px;" width="16" height="16" viewBox="0 0 16 16"><rect x="0" y="1" width="15.5" height="14" fill="#94a7bb"/><rect x="0" y="1" width="15.5" height="1.2" fill="#b9c6d4"/><rect x="0" y="13.8" width="15.5" height="1.4" fill="#2f3f50"/><g fill="#fff"><rect x="1.2" y="3.0" width="1.1" height="1.1"/><rect x="3.2" y="3.0" width="1.1" height="1.1"/><rect x="5.3" y="3.0" width="1.1" height="1.1"/><rect x="7.3" y="3.0" width="1.1" height="1.1"/><rect x="9.4" y="3.0" width="1.1" height="1.1"/><rect x="11.4" y="3.0" width="1.1" height="1.1"/><rect x="13.5" y="3.0" width="1.1" height="1.1"/><rect x="1.2" y="5.0" width="1.1" height="1.1"/><rect x="3.2" y="5.0" width="1.1" height="1.1"/><rect x="5.3" y="5.0" width="1.1" height="1.1"/><rect x="7.3" y="5.0" width="1.1" height="1.1"/><rect x="9.4" y="5.0" width="1.1" height="1.1"/><rect x="11.4" y="5.0" width="1.1" height="1.1"/><rect x="13.5" y="5.0" width="1.1" height="1.1"/><rect x="1.2" y="7.0" width="1.1" height="1.1"/><rect x="3.2" y="7.0" width="1.1" height="1.1"/><rect x="5.3" y="7.0" width="1.1" height="1.1"/><rect x="7.3" y="7.0" width="1.1" height="1.1"/><rect x="9.4" y="7.0" width="1.1" height="1.1"/><rect x="11.4" y="7.0" width="1.1" height="1.1"/><rect x="13.5" y="7.0" width="1.1" height="1.1"/><rect x="1.2" y="9.0" width="1.1" height="1.1"/><rect x="3.2" y="9.0" width="1.1" height="1.1"/><rect x="5.3" y="9.0" width="1.1" height="1.1"/><rect x="7.3" y="9.0" width="1.1" height="1.1"/><rect x="9.4" y="9.0" width="1.1" height="1.1"/><rect x="11.4" y="9.0" width="1.1" height="1.1"/><rect x="13.5" y="9.0" width="1.1" height="1.1"/><rect x="1.2" y="11.0" width="1.1" height="1.1"/><rect x="3.2" y="11.0" width="1.1" height="1.1"/><rect x="5.3" y="11.0" width="1.1" height="1.1"/><rect x="7.3" y="11.0" width="1.1" height="1.1"/><rect x="9.4" y="11.0" width="1.1" height="1.1"/><rect x="11.4" y="11.0" width="1.1" height="1.1"/><rect x="13.5" y="11.0" width="1.1" height="1.1"/><rect x="1.2" y="13.0" width="1.1" height="1.1"/><rect x="3.2" y="13.0" width="1.1" height="1.1"/><rect x="5.3" y="13.0" width="1.1" height="1.1"/><rect x="7.3" y="13.0" width="1.1" height="1.1"/><rect x="9.4" y="13.0" width="1.1" height="1.1"/><rect x="11.4" y="13.0" width="1.1" height="1.1"/><rect x="13.5" y="13.0" width="1.1" height="1.1"/></g></svg>
<div class="t ui" style="left:518px;top:353px;letter-spacing:-0.159px;">Channel Overview</div>
<svg class="a" style="left:373px;top:351px;" width="16" height="16" viewBox="0 0 16 16"><path d="M3 1.2 L4.6 .8 L5.2 14.6 L4.2 15.8 L3.2 14.5Z" fill="#cfd6dc" stroke="#8b949c" stroke-width=".5"/><path d="M5.5 2.8 L13 .5 L13 6.5 L10.5 9 L8.5 9.5 L7.5 11.5 L5.8 12Z" fill="#35a52e" stroke="#1e7a1a" stroke-width=".5"/><path d="M7 3.8 L11.5 2.4 L11.5 6 L7 7.6Z" fill="#111"/><path d="M8 8.8 L10 8.2 L9.5 10 L8 10.4Z" fill="#d8b23a"/></svg>
<div class="t ui" style="left:397px;top:353px;letter-spacing:-0.210px;">DMX Interfaces</div>
<svg class="a" style="left:269px;top:351px;" width="16" height="16" viewBox="0 0 16 16"><defs><linearGradient id="pg" x1="0" y1="0" x2="1" y2="1"><stop offset="0" stop-color="#cfe6fb"/><stop offset="1" stop-color="#5aa9ee"/></linearGradient></defs><rect x="2.5" y="1.5" width="11" height="13.5" fill="url(#pg)" stroke="#9fb4c8" stroke-width=".8"/><rect x="3.5" y="3" width="4.5" height="1.3" fill="#222"/><rect x="3.5" y="4.3" width="4.5" height="1" fill="#fff"/><rect x="9.5" y="3" width="3" height="1" fill="#b9cfe4"/><rect x="3.5" y="8.2" width="4.5" height="1.3" fill="#222"/><rect x="5.5" y="9.5" width="4" height="1" fill="#fff"/><rect x="3.5" y="12.3" width="4" height="1.2" fill="#a9c4dd"/></svg>
<div class="t ui" style="left:290px;top:353px;letter-spacing:-0.068px;">Programmer</div>
<svg class="a" style="left:145px;top:351px;" width="16" height="16" viewBox="0 0 16 16"><path d="M1 5.5 L3.5 5 L5 2.5 L8 2 L9 3.5 L15 3.5 L15 11 L4 12.5 Z" fill="#f0d98a" stroke="#b79a45" stroke-width=".8"/><path d="M1 5.5 L11 5.5 L13 12 L4 12.5Z" fill="#f6e6a4" stroke="#b79a45" stroke-width=".6"/><circle cx="9.5" cy="8.3" r="3" fill="#dbe9f4" stroke="#8a8a8a" stroke-width="1.1"/><path d="M11.8 10.8 L15.2 14.2" stroke="#b08236" stroke-width="1.8" stroke-linecap="round"/></svg>
<div class="t ui b" style="left:164px;top:353px;letter-spacing:-0.263px;">Project Explorer</div>
<div class="dd" style="left:930px;top:358px;border-top-color:#000"></div>
<svg class="a" style="left:929px;top:357px" width="9" height="5" viewBox="0 0 9 5"><path d="M0 0 H9 L4.5 5Z" fill="#000"/></svg>
<svg class="a" style="left:945px;top:355px" width="9" height="9" viewBox="0 0 9 9"><path d="M.5 .5 L8.5 8.5 M8.5 .5 L.5 8.5" stroke="#000" stroke-width="1.4" fill="none"/></svg>
<div class="a" style="left:124px;top:370px;width:139px;height:39px;background:linear-gradient(#fcfcfc,#f4f4f4 70%,#ececec);border-radius:0 0 3px 0"></div>
<div class="a" style="left:264px;top:370px;width:688px;height:39px;background:linear-gradient(#fcfcfc,#f4f4f4 70%,#ececec)"></div>
<div class="a" style="left:952px;top:370px;width:11px;height:39px;background:linear-gradient(#f8f8f8,#d6d6d6);border-radius:0 0 3px 0"></div>
<svg class="a" style="left:953px;top:398px" width="7" height="8" viewBox="0 0 7 8"><path d="M0 1 H7 M0 4 H7 L3.5 7.5Z" stroke="#000" fill="#000" stroke-width="1"/></svg>
<svg class="a" style="left:133px;top:374px;" width="16" height="16" viewBox="0 0 16 16"><path d="M6.5 .5 h5.5 l2.5 2.5 v7 h-8z" fill="#f4f6f9" stroke="#b8bec6"/><path d="M.5 4.5 h7.5 v11 h-7.5z" fill="#fafafa" stroke="#a9adb3"/><path d="M2 9.5h4.5M2 12h4.5" stroke="#9a9a9a" stroke-width=".8"/><path d="M9 3h3M9 5h3M9.5 7h3" stroke="#9ab3d6" stroke-width=".8"/></svg>
<div class="t ui c" style="left:40.73px;width:200px;top:391px;letter-spacing:-0.545px;">Edit</div>
<svg class="a" style="left:176px;top:374px;" width="16" height="16" viewBox="0 0 16 16"><rect x=".5" y="1.5" width="15" height="13" fill="#f6f6f6" stroke="#aeb3ba"/><rect x="1" y="2" width="14" height="2" fill="#d5d9de"/><path d="M2.5 6.5h3.5M2.5 9h3.5M2.5 11.5h3.5M8 6.5h6M8 9h6M8 11.5h6" stroke="#cfd2d6" stroke-width="1.2"/></svg>
<div class="t ui c" style="left:83.85px;width:200px;top:391px;letter-spacing:-0.298px;">View</div>
<svg class="a" style="left:227px;top:374px;" width="16" height="16" viewBox="0 0 16 16"><path d="M3.4 7.4 A5 5.4 0 0 1 11.6 3.4" stroke="#1a66b4" stroke-width="4" fill="none"/><path d="M3.4 7.4 A5 5.4 0 0 1 11.6 3.4" stroke="#2f86dc" stroke-width="2.6" fill="none"/><path d="M8.8 6.8 L15.2 3 L14.8 10Z" fill="#1f74c9"/><path d="M13 9 A5 5.4 0 0 1 4.8 13" stroke="#1a66b4" stroke-width="4" fill="none"/><path d="M13 9 A5 5.4 0 0 1 4.8 13" stroke="#2f86dc" stroke-width="2.6" fill="none"/><path d="M7.4 9.6 L1 13.6 L1.4 6.6Z" fill="#1f74c9"/><path d="M8.4 7.4 L11 8.8 L9 9.8Z" fill="#eef5fc"/></svg>
<div class="t ui c" style="left:134.71px;width:200px;top:391px;letter-spacing:-0.574px;">Refresh</div>
<svg class="a" style="left:303px;top:374px;" width="16" height="16" viewBox="0 0 16 16"><path d="M.8 4 L3 3.6 L4.5 1.5 L7.5 1.2 L8.5 2.8 L14 2.8 L14 10 L3.5 11.5 Z" fill="#f0d98a" stroke="#b79a45" stroke-width=".8"/><path d="M.8 4 L10.5 4.2 L12.5 10.5 L3.5 11.5Z" fill="#f7e8a8" stroke="#b79a45" stroke-width=".6"/><path d="M11 7.2 v7.6 M7.2 11 h7.6" stroke="#1c6b12" stroke-width="3.4"/><path d="M11 7.9 v6.2 M7.9 11 h6.2" stroke="#49c02d" stroke-width="2"/></svg>
<div class="t ui c" style="left:210.91px;width:200px;top:391px;letter-spacing:-0.172px;">Create Directory</div>
<svg class="a" style="left:370px;top:374px;" width="16" height="16" viewBox="0 0 16 16"><defs><linearGradient id="ug" x1="0" y1="0" x2="0" y2="1"><stop offset="0" stop-color="#d2d2d2"/><stop offset="1" stop-color="#a9a9a9"/></linearGradient></defs><path d="M8 0 L14 6.6 L10.9 6.6 L10.9 16 L5.1 16 L5.1 6.6 L2 6.6Z" fill="url(#ug)"/></svg>
<div class="t ui c" style="left:277.92px;width:200px;top:391px;letter-spacing:-0.170px;color:#8d8d8d">Up</div>
<svg class="a" style="left:404px;top:374px;" width="16" height="16" viewBox="0 0 16 16"><defs><linearGradient id="dg" x1="0" y1="0" x2="0" y2="1"><stop offset="0" stop-color="#d2d2d2"/><stop offset="1" stop-color="#a9a9a9"/></linearGradient></defs><path d="M8 16 L14 9.4 L10.9 9.4 L10.9 0 L5.1 0 L5.1 9.4 L2 9.4Z" fill="url(#dg)"/></svg>
<div class="t ui c" style="left:311.92px;width:200px;top:391px;letter-spacing:-0.170px;color:#8d8d8d">Down</div>
<svg class="a" style="left:467px;top:374px;" width="16" height="16" viewBox="0 0 16 16"><path d="M2 4 L4.5 3.6 L6 1.5 L9 1.2 L10 2.8 L15 2.8 L15 10.5 L5 12 Z" fill="#e9c867" stroke="#a98a34" stroke-width=".8"/><path d="M2.5 4.5 L12 4.5 L14 11 L5 12Z" fill="#f4dd8e" stroke="#a98a34" stroke-width=".6"/><path d="M1 7.5 L5 6 L8 9.5 L6.5 12.5 L3 11.5Z" fill="#3b3b3b"/><circle cx="3.6" cy="8.8" r="1.6" fill="#9a9a9a"/><path d="M5 12 L4 15 M6.5 12 L8.5 14.8" stroke="#444" stroke-width="1"/></svg>
<div class="t ui c" style="left:374.93px;width:200px;top:391px;letter-spacing:-0.136px;">Add Device</div>
<svg class="a" style="left:568px;top:374px;" width="16" height="16" viewBox="0 0 16 16"><path d="M1 4 L8 .8 L15 3 L15 11.5 L8 15.2 L1 12.5Z" fill="#d6b53c" stroke="#94761b" stroke-width=".7"/><path d="M1 4 L8 6.5 L15 3 L8 .8Z" fill="#f1d970"/><path d="M8 6.5 L8 15.2 L15 11.5 L15 3Z" fill="#b9972a"/><path d="M4.5 2.4 L11.5 4.8 L11.5 13.3 M1 8.2 L8 10.8 L15 7.2 M4.5 5.3 L4.5 13.9" stroke="#7d6414" stroke-width=".7" fill="none"/><circle cx="11" cy="3" r="1.6" fill="#f8a83a"/></svg>
<div class="t ui c" style="left:475.86px;width:200px;top:391px;letter-spacing:-0.275px;">Create Device Group</div>
<svg class="a" style="left:694px;top:374px;" width="16" height="16" viewBox="0 0 16 16"><path d="M5 1.5 L10.5 1.5 L10.5 8 L5 8Z" fill="#2f66d0" stroke="#1c3f8f" stroke-width=".7"/><path d="M5 1.5 L6.5 .5 L11.8 .5 L10.5 1.5Z" fill="#7aa5ee"/><path d="M10.5 1.5 L11.8 .5 L11.8 7 L10.5 8Z" fill="#1f4aa6"/><rect x="1" y="8" width="6.5" height="6.5" fill="#e9cf3a" stroke="#a38b12" stroke-width=".7"/><path d="M1 8 L2.3 6.8 L8.8 6.8 L7.5 8Z" fill="#f6e98a"/><rect x="8.5" y="8.5" width="6.5" height="6.5" fill="#3cae2f" stroke="#1f7217" stroke-width=".7"/><path d="M8.5 8.5 L9.8 7.3 L15.8 7.3 L15 8.5Z" fill="#8be07f"/></svg>
<div class="t ui c" style="left:601.81px;width:200px;top:391px;letter-spacing:-0.383px;">Create Executor Page</div>
<svg class="a" style="left:798px;top:374px;" width="16" height="16" viewBox="0 0 16 16"><path d="M1.5 11 L5 7.5 L14.5 7.5 L14.5 11 L11 14.8 L1.5 14.8Z" fill="#d4d7db" stroke="#7f858c" stroke-width=".8"/><path d="M1.5 11 L11 11 L14.5 7.5 M11 11 L11 14.8" stroke="#7f858c" stroke-width=".7" fill="none"/><path d="M8 .5 L11 .5 L11 4.5 L13.2 4.5 L9.5 9 L5.8 4.5 L8 4.5Z" fill="#3bb52e" stroke="#1e7a17" stroke-width=".7"/></svg>
<div class="t ui c" style="left:705.94px;width:200px;top:391px;letter-spacing:-0.123px;">Import Files</div>
<svg class="a" style="left:881px;top:374px;" width="16" height="16" viewBox="0 0 16 16"><path d="M4 6.5 L8 6.5 L8 11.5 L10 11.5 M8 4 L10 4" stroke="#1d4f8a" stroke-width="1.2" fill="none"/><rect x="8.5" y="1.5" width="7" height="4.5" rx=".8" fill="#9fd15f" stroke="#4e8b1f" stroke-width=".9"/><rect x=".5" y="5" width="7" height="4.5" rx=".8" fill="#a8d3f3" stroke="#1d4f8a" stroke-width=".9"/><rect x="8.5" y="9.5" width="7" height="5" rx=".8" fill="#a8d3f3" stroke="#1d4f8a" stroke-width=".9"/><circle cx="8.7" cy="3.6" r="2.3" fill="#f7b13c"/><path d="M7.7 2.6 l2 2 m0 -2 l-2 2" stroke="#fff" stroke-width=".7"/></svg>
<div class="t ui c" style="left:788.98px;width:200px;top:391px;letter-spacing:-0.041px;">Add Item List</div>
<div class="dd" style="left:157px;top:387px;border-top-color:#000"></div>
<div class="dd" style="left:201px;top:387px;border-top-color:#000"></div>
<div class="a" style="left:363px;top:376px;width:1px;height:28px;background:#b8b8b8"></div>
<div class="a" style="left:437px;top:376px;width:1px;height:28px;background:#b8b8b8"></div>
<div class="a" style="left:514px;top:376px;width:1px;height:28px;background:#b8b8b8"></div>
<div class="a" style="left:639px;top:376px;width:1px;height:28px;background:#b8b8b8"></div>
<div class="a" style="left:767px;top:376px;width:1px;height:28px;background:#b8b8b8"></div>
<div class="a" style="left:846px;top:376px;width:1px;height:28px;background:#b8b8b8"></div>
<div class="a" style="left:933px;top:376px;width:1px;height:28px;background:#b8b8b8"></div>
<div class="a" style="left:262px;top:376px;width:1px;height:30px;background:#d6d6d6"></div>
<div class="a" style="left:124px;top:409px;width:237px;height:280px;background:#fff;border:1px solid #828790"></div>
<div class="a" style="left:136px;top:419px;width:1px;height:177px;background:repeating-linear-gradient(#fff 0 1px,#8a8a8a 1px 2px)"></div>
<div class="a" style="left:137px;top:419px;width:10px;height:1px;background:repeating-linear-gradient(90deg,#fff 0 1px,#8a8a8a 1px 2px)"></div>
<svg class="a" style="left:147px;top:411px;" width="16" height="16" viewBox="0 0 16 16"><rect x=".5" y="1" width="15" height="13.5" rx="1" fill="#f6f8fa" stroke="#8e9bab"/><rect x="1" y="1.5" width="14" height="2" fill="#d5dde6"/><path d="M4.2 3.5V14M7.9 3.5V14M11.6 3.5V14M1 6.2H15M1 8.9H15M1 11.6H15" stroke="#b4c0cd" stroke-width="1"/></svg>
<div class="t ms" style="left:168px;top:412px;letter-spacing:-0.415px;">Cuelists</div>
<div class="a" style="left:137px;top:435px;width:10px;height:1px;background:repeating-linear-gradient(90deg,#fff 0 1px,#8a8a8a 1px 2px)"></div>
<div class="a" style="left:132px;top:431px;width:9px;height:9px;background:#fff;border:1px solid #919191;border-radius:1px"></div>
<div class="a" style="left:134px;top:435px;width:5px;height:1px;background:#28327a"></div>
<div class="a" style="left:136px;top:433px;width:1px;height:5px;background:#28327a"></div>
<svg class="a" style="left:147px;top:427px;" width="16" height="16" viewBox="0 0 16 16"><rect x="3.5" y=".5" width="12" height="11.5" fill="#fafafa" stroke="#8e939a"/><path d="M7.5 .5V12M11.5 .5V12M3.5 4.3H15.5M3.5 8.2H15.5" stroke="#8e939a" stroke-width=".9"/><rect x=".5" y="3.5" width="12" height="12" fill="#fff" stroke="#7f858c"/><path d="M4.5 3.5V15.5M8.5 3.5V15.5M.5 7.5H12.5M.5 11.5H12.5" stroke="#7f858c" stroke-width="1.3"/></svg>
<div class="t ms" style="left:168px;top:428px;letter-spacing:-0.354px;">Cuelist Groups</div>
<div class="a" style="left:137px;top:451px;width:10px;height:1px;background:repeating-linear-gradient(90deg,#fff 0 1px,#8a8a8a 1px 2px)"></div>
<div class="a" style="left:132px;top:447px;width:9px;height:9px;background:#fff;border:1px solid #919191;border-radius:1px"></div>
<div class="a" style="left:134px;top:451px;width:5px;height:1px;background:#28327a"></div>
<div class="a" style="left:136px;top:449px;width:1px;height:5px;background:#28327a"></div>
<svg class="a" style="left:147px;top:443px;" width="16" height="16" viewBox="0 0 16 16"><path d="M4 3.5 L6 3 L7.5 1 L11 .8 L12 2.5 L15.5 2.5 L15.5 10 L7 11.5 Z" fill="#e3bf5c" stroke="#a98a34" stroke-width=".8"/><path d="M4 4 L13 4 L15 10.5 L7 11.5Z" fill="#f3d98a" stroke="#a98a34" stroke-width=".6"/><path d="M1 7 L5.5 5.5 L9 9.5 L7 13 L3 12Z" fill="#3a3a3a"/><circle cx="3.8" cy="8.4" r="1.8" fill="#d5e04a"/><circle cx="3.8" cy="8.4" r=".9" fill="#fff"/><path d="M5.5 12.5 L4.5 15.5 L9.5 15.5 L8 13" fill="#777" stroke="#444" stroke-width=".6"/></svg>
<div class="t ms" style="left:168px;top:444px;letter-spacing:-0.160px;">Devices</div>
<div class="a" style="left:137px;top:467px;width:10px;height:1px;background:repeating-linear-gradient(90deg,#fff 0 1px,#8a8a8a 1px 2px)"></div>
<div class="a" style="left:132px;top:463px;width:9px;height:9px;background:#fff;border:1px solid #919191;border-radius:1px"></div>
<div class="a" style="left:134px;top:467px;width:5px;height:1px;background:#28327a"></div>
<div class="a" style="left:136px;top:465px;width:1px;height:5px;background:#28327a"></div>
<svg class="a" style="left:147px;top:459px;" width="16" height="16" viewBox="0 0 16 16"><path d="M.8 4 L8 .8 L15.5 3 L15.5 11.5 L8 15.5 L.8 12.5Z" fill="#cfae35" stroke="#8a6e16" stroke-width=".7"/><path d="M.8 4 L8 6.5 L15.5 3 L8 .8Z" fill="#efd86c"/><path d="M8 6.5 L8 15.5 L15.5 11.5 L15.5 3Z" fill="#a8861f"/><path d="M4.4 2.4 L11.8 4.8 L11.8 13.5 M.8 8.2 L8 10.8 L15.5 7.2 M4.4 5.3 L4.4 14" stroke="#6e5710" stroke-width=".8" fill="none"/></svg>
<div class="t ms" style="left:168px;top:460px;letter-spacing:-0.235px;">Device Groups</div>
<div class="a" style="left:137px;top:483px;width:10px;height:1px;background:repeating-linear-gradient(90deg,#fff 0 1px,#8a8a8a 1px 2px)"></div>
<div class="a" style="left:132px;top:479px;width:9px;height:9px;background:#fff;border:1px solid #919191;border-radius:1px"></div>
<div class="a" style="left:134px;top:483px;width:5px;height:1px;background:#28327a"></div>
<div class="a" style="left:136px;top:481px;width:1px;height:5px;background:#28327a"></div>
<svg class="a" style="left:147px;top:475px;" width="16" height="16" viewBox="0 0 16 16"><path d="M1.5 3 L10.5 1 L14.5 2.5 L14.5 12.5 L10.5 14.8 L1.5 13Z" fill="#b9c4cf" stroke="#77828d" stroke-width=".6"/><path d="M1.5 3 L10.5 4.5 L10.5 14.8 L1.5 13Z" fill="#dfe5ea"/><path d="M10.5 4.5 L14.5 2.5 L14.5 12.5 L10.5 14.8Z" fill="#7b8792"/><path d="M1.5 3 L10.5 1 L14.5 2.5 L10.5 4.5Z" fill="#eef1f4"/></svg>
<div class="t ms" style="left:168px;top:476px;letter-spacing:-0.264px;">Executor</div>
<div class="a" style="left:137px;top:499px;width:10px;height:1px;background:repeating-linear-gradient(90deg,#fff 0 1px,#8a8a8a 1px 2px)"></div>
<svg class="a" style="left:147px;top:491px;" width="16" height="16" viewBox="0 0 16 16"><path d="M5 1.5 L10.5 1.5 L10.5 8 L5 8Z" fill="#2f66d0" stroke="#1c3f8f" stroke-width=".7"/><path d="M5 1.5 L6.5 .5 L11.8 .5 L10.5 1.5Z" fill="#7aa5ee"/><path d="M10.5 1.5 L11.8 .5 L11.8 7 L10.5 8Z" fill="#1f4aa6"/><rect x="1" y="8" width="6.5" height="6.5" fill="#e9cf3a" stroke="#a38b12" stroke-width=".7"/><path d="M1 8 L2.3 6.8 L8.8 6.8 L7.5 8Z" fill="#f6e98a"/><rect x="8.5" y="8.5" width="6.5" height="6.5" fill="#3cae2f" stroke="#1f7217" stroke-width=".7"/><path d="M8.5 8.5 L9.8 7.3 L15.8 7.3 L15 8.5Z" fill="#8be07f"/></svg>
<div class="t ms" style="left:168px;top:492px;letter-spacing:-0.297px;">Executor Pages</div>
<div class="a" style="left:137px;top:515px;width:10px;height:1px;background:repeating-linear-gradient(90deg,#fff 0 1px,#8a8a8a 1px 2px)"></div>
<svg class="a" style="left:147px;top:507px;" width="16" height="16" viewBox="0 0 16 16"><path d="M1 4.5 L3.5 4 L5 2 L8.5 1.6 L9.5 3.2 L15 3.2 L15 11.5 L4.5 13.5 Z" fill="#e8c96a" stroke="#a98a34" stroke-width=".8"/><path d="M1 4.5 L11.5 4.8 L13.5 12 L4.5 13.5Z" fill="#f5e09a" stroke="#a98a34" stroke-width=".6"/></svg>
<div class="t ms" style="left:168px;top:508px;letter-spacing:-0.499px;">Presets</div>
<div class="a" style="left:137px;top:531px;width:10px;height:1px;background:repeating-linear-gradient(90deg,#fff 0 1px,#8a8a8a 1px 2px)"></div>
<svg class="a" style="left:147px;top:523px;" width="16" height="16" viewBox="0 0 16 16"><path d="M1.5 11 L5 7.5 L14.5 7.5 L14.5 11 L11 14.8 L1.5 14.8Z" fill="#d4d7db" stroke="#7f858c" stroke-width=".8"/><path d="M1.5 11 L11 11 L14.5 7.5 M11 11 L11 14.8" stroke="#7f858c" stroke-width=".7" fill="none"/><path d="M8 .5 L11 .5 L11 4.5 L13.2 4.5 L9.5 9 L5.8 4.5 L8 4.5Z" fill="#3bb52e" stroke="#1e7a17" stroke-width=".7"/></svg>
<div class="t ms" style="left:168px;top:524px;letter-spacing:-0.685px;">Files</div>
<div class="a" style="left:137px;top:547px;width:10px;height:1px;background:repeating-linear-gradient(90deg,#fff 0 1px,#8a8a8a 1px 2px)"></div>
<div class="a" style="left:166px;top:539px;width:48px;height:16px;background:#f0f0f0"></div>
<svg class="a" style="left:147px;top:539px;" width="16" height="16" viewBox="0 0 16 16"><path d="M4 6.5 L8 6.5 L8 11.5 L10 11.5 M8 6.5 L8 3.5 L10 3.5" stroke="#1d4f8a" stroke-width="1.2" fill="none"/><rect x="8.5" y="1.5" width="7" height="4.5" rx=".8" fill="#8fd06f" stroke="#2f7d2a" stroke-width=".9"/><rect x=".5" y="5" width="7" height="4.5" rx=".8" fill="#a8d3f3" stroke="#1d4f8a" stroke-width=".9"/><rect x="8.5" y="9.5" width="7" height="5" rx=".8" fill="#a8d3f3" stroke="#1d4f8a" stroke-width=".9"/></svg>
<div class="t ms" style="left:168px;top:540px;letter-spacing:-0.447px;">Item Lists</div>
<div class="a" style="left:137px;top:563px;width:10px;height:1px;background:repeating-linear-gradient(90deg,#fff 0 1px,#8a8a8a 1px 2px)"></div>
<svg class="a" style="left:147px;top:555px;" width="16" height="16" viewBox="0 0 16 16"><path d="M1 4.5 L3.5 4 L5 2 L8.5 1.6 L9.5 3.2 L15 3.2 L15 11.5 L4.5 13.5 Z" fill="#e8c96a" stroke="#a98a34" stroke-width=".8"/><path d="M1 4.5 L11.5 4.8 L13.5 12 L4.5 13.5Z" fill="#f5e09a" stroke="#a98a34" stroke-width=".6"/><circle cx="11.3" cy="11.6" r="3.6" fill="#8d97a3" stroke="#5f6a76" stroke-width=".7" stroke-dasharray="1.6 1.1"/><circle cx="11.3" cy="11.6" r="2.6" fill="#aab3bd"/><circle cx="11.3" cy="11.6" r="1.1" fill="#eef1f4"/></svg>
<div class="t ms" style="left:168px;top:556px;letter-spacing:-0.368px;">Settings</div>
<div class="a" style="left:137px;top:579px;width:10px;height:1px;background:repeating-linear-gradient(90deg,#fff 0 1px,#8a8a8a 1px 2px)"></div>
<div class="a" style="left:132px;top:575px;width:9px;height:9px;background:#fff;border:1px solid #919191;border-radius:1px"></div>
<div class="a" style="left:134px;top:579px;width:5px;height:1px;background:#28327a"></div>
<div class="a" style="left:136px;top:577px;width:1px;height:5px;background:#28327a"></div>
<svg class="a" style="left:147px;top:571px;" width="16" height="16" viewBox="0 0 16 16"><path d="M1 4.5 L3.5 4 L5 2 L8.5 1.6 L9.5 3.2 L15 3.2 L15 11.5 L4.5 13.5 Z" fill="#e8c96a" stroke="#a98a34" stroke-width=".8"/><path d="M1 4.5 L11.5 4.8 L13.5 12 L4.5 13.5Z" fill="#f5e09a" stroke="#a98a34" stroke-width=".6"/></svg>
<div class="t ms" style="left:168px;top:572px;letter-spacing:-0.295px;">Stage View</div>
<div class="a" style="left:137px;top:595px;width:10px;height:1px;background:repeating-linear-gradient(90deg,#fff 0 1px,#8a8a8a 1px 2px)"></div>
<svg class="a" style="left:147px;top:587px;" width="16" height="16" viewBox="0 0 16 16"><path d="M1 4.5 L3.5 4 L5 2 L8.5 1.6 L9.5 3.2 L15 3.2 L15 11.5 L4.5 13.5 Z" fill="#e8c96a" stroke="#a98a34" stroke-width=".8"/><path d="M1 4.5 L11.5 4.8 L13.5 12 L4.5 13.5Z" fill="#f5e09a" stroke="#a98a34" stroke-width=".6"/></svg>
<div class="t ms" style="left:168px;top:588px;letter-spacing:-0.461px;">Layouts</div>
<div class="a" style="left:365px;top:410px;width:598px;height:47px;background:#f0f0f0;border:1px solid #696969;border-right-color:#e3e3e3;border-bottom-color:#e3e3e3"></div>
<div class="a" style="left:366px;top:411px;width:596px;height:45px;border:1px solid #a0a0a0;border-right-color:#fff;border-bottom-color:#fff"></div>
<div class="t ms" style="left:368px;top:412px;letter-spacing:-0.170px;">The "Item Lists" branch contains all item lists. An item list e.g. is a colorlist or a gobolist. You can use those Lists in several</div>
<div class="t ms" style="left:368px;top:425px;letter-spacing:-0.154px;">places in DMXControl. A gobolist can be configured in properties of a device. Same with colorlist. You can use the lists in</div>
<div class="t ms" style="left:368px;top:438px;letter-spacing:-0.218px;">some effects as parameters, too.</div>
<div class="a" style="left:365px;top:463px;width:598px;height:226px;background:#fff;border:1px solid #828790"></div>
<div class="t ms" style="left:373px;top:470px;letter-spacing:-0.523px;">Name</div>
<div class="t ms" style="left:508px;top:470px;letter-spacing:-0.149px;">Type</div>
<div class="t ms" style="left:578px;top:470px;letter-spacing:-0.354px;">Number of Items</div>
<div class="a" style="left:501px;top:465px;width:1px;height:24px;background:#e5e5e5"></div>
<div class="a" style="left:571px;top:465px;width:1px;height:24px;background:#e5e5e5"></div>
<div class="a" style="left:958px;top:465px;width:1px;height:24px;background:#e5e5e5"></div>
<svg class="a" style="left:371px;top:490px;" width="16" height="16" viewBox="0 0 16 16"><circle cx="8" cy="8" r="7.3" fill="#3f76c8" stroke="#2a4f8f" stroke-width=".6"/><circle cx="5.6" cy="6" r="4" fill="#4a8de0" opacity=".9"/><circle cx="10.6" cy="6.2" r="3.8" fill="#3fb8a8" opacity=".9"/><circle cx="8.2" cy="10.6" r="3.8" fill="#d04a8e" opacity=".85"/><circle cx="8" cy="7.6" r="1.8" fill="#e8f2d8" opacity=".8"/><circle cx="11" cy="10" r="1.8" fill="#5fc24a" opacity=".9"/></svg>
<div class="a" style="left:387px;top:489px;width:106px;height:17px;background:#fff;border:1px solid #000"></div>
<div class="a" style="left:390px;top:491px;width:91px;height:13px;background:#0078d7"></div>
<div class="t ms" style="left:391px;top:491px;letter-spacing:-0.368px;color:#fff">Standard Colorlist 1</div>
<div class="t ms" style="left:508px;top:491px;letter-spacing:-0.470px;">Colorlist</div>
<div class="t ms" style="left:578px;top:491px;letter-spacing:-0.428px;">5</div>
<svg class="a" style="left:486px;top:511px" width="13" height="20" viewBox="0 0 13 20"><path d="M.5 .5 V16.5 L4.2 13 L7 19 L9.3 18 L6.5 12.2 H11.5Z" fill="#fff" stroke="#000" stroke-width="1"/></svg>
<div class="hdr" style="left:122px;top:694px;width:160px"></div><div class="t ui" style="left:128px;top:697px;letter-spacing:-0.162px;color:#3e4d60">Manual Beat</div><svg class="a" style="left:251px;top:699px" width="7" height="10" viewBox="0 0 7 10"><path d="M1.5 0 V6 M4.5 0 V6 M1 .5 H5 M0 6 H7 M3.5 6 V10" stroke="#2d3640" stroke-width="1" fill="none"/><path d="M4 0 H5.5 V6 H4Z" fill="#2d3640"/></svg><svg class="a" style="left:267px;top:700px" width="9" height="8" viewBox="0 0 9 8"><path d="M.5 .5 L8.5 7.5 M8.5 .5 L.5 7.5" stroke="#2d3640" stroke-width="1.3" fill="none"/></svg>
<div class="btn ms" style="left:132px;top:722px;width:54px;height:24px;line-height:22px;letter-spacing:-.4px;">Tap</div>
<div class="a" style="left:192px;top:721px;width:17px;height:26px;background:#000"></div>
<div class="btn ms" style="left:215px;top:722px;width:54px;height:24px;line-height:22px;letter-spacing:-.4px;">Sync</div>
<div class="a" style="left:131px;top:752px;width:140px;height:20px;background:#fff;border:1px solid #7a7a7a"></div>
<div class="t ms c" style="left:100.91px;width:200px;top:755px;letter-spacing:-0.173px;">0 ms / 0 bpm</div>
<div class="a" style="left:131px;top:783px;width:13px;height:13px;background:#fff;border:1px solid #333"></div>
<div class="t ms" style="left:150px;top:783px;letter-spacing:-0.367px;">Enabled</div>
<div class="a" style="left:206px;top:783px;width:13px;height:13px;background:#fff;border:1px solid #333"></div>
<div class="t ms" style="left:225px;top:783px;letter-spacing:-0.311px;">R.M.O.C</div>
<div class="btn ms" style="left:135px;top:800px;width:20px;height:20px;line-height:18px;letter-spacing:-.4px;">+</div>
<div class="btn ms" style="left:162px;top:800px;width:20px;height:20px;line-height:18px;letter-spacing:-.4px;">-</div>
<div class="btn ms" style="left:194px;top:800px;width:20px;height:20px;line-height:18px;letter-spacing:-.4px;background:#f1f1f1;box-shadow:inset 0 0 0 2px #e1e1e1;">2</div>
<div class="btn ms" style="left:221px;top:800px;width:20px;height:20px;line-height:18px;letter-spacing:-.4px;background:#add8e6;box-shadow:inset 0 0 0 2px #e1e1e1;">1</div>
<div class="btn ms" style="left:248px;top:800px;width:20px;height:20px;line-height:18px;letter-spacing:-.4px;background:#f1f1f1;box-shadow:inset 0 0 0 2px #e1e1e1;">½</div>
<div class="t ms c" style="left:54.79px;width:200px;top:823px;letter-spacing:-0.428px;">0</div>
<div class="t ms c" style="left:77.79px;width:200px;top:823px;letter-spacing:-0.428px;">0</div>
<div class="t ms c" style="left:99.79px;width:200px;top:823px;letter-spacing:-0.428px;">0</div>
<div class="t ms c" style="left:121.79px;width:200px;top:823px;letter-spacing:-0.428px;">0</div>
<div class="t ms c" style="left:144.79px;width:200px;top:823px;letter-spacing:-0.428px;">0</div>
<div class="hdr" style="left:286px;top:694px;width:230px"></div><div class="t ui" style="left:292px;top:697px;letter-spacing:-0.043px;color:#3e4d60">Intensity</div><svg class="a" style="left:485px;top:699px" width="7" height="10" viewBox="0 0 7 10"><path d="M1.5 0 V6 M4.5 0 V6 M1 .5 H5 M0 6 H7 M3.5 6 V10" stroke="#2d3640" stroke-width="1" fill="none"/><path d="M4 0 H5.5 V6 H4Z" fill="#2d3640"/></svg><svg class="a" style="left:501px;top:700px" width="9" height="8" viewBox="0 0 9 8"><path d="M.5 .5 L8.5 7.5 M8.5 .5 L.5 7.5" stroke="#2d3640" stroke-width="1.3" fill="none"/></svg>
<div class="btn ms" style="left:287px;top:713px;width:40px;height:39px;line-height:37px;letter-spacing:-.4px;padding-top:1px">FL</div>
<div class="btn ms" style="left:287px;top:754px;width:40px;height:39px;line-height:37px;letter-spacing:-.4px;padding-top:1px">70</div>
<div class="btn ms" style="left:287px;top:795px;width:40px;height:39px;line-height:37px;letter-spacing:-.4px;padding-top:1px">50</div>
<div class="btn ms" style="left:287px;top:836px;width:40px;height:39px;line-height:37px;letter-spacing:-.4px;padding-top:1px">30</div>
<div class="btn ms" style="left:287px;top:877px;width:40px;height:39px;line-height:37px;letter-spacing:-.4px;padding-top:1px">0</div>
<div class="a" style="left:349px;top:720px;width:4px;height:188px;background:#e7eaea;border:1px solid #d6d6d6"></div>
<div class="a" style="left:340px;top:898px;width:21px;height:10px;background:#0078d7"></div>
<div class="a" style="left:335px;top:725px;width:3px;height:1px;background:#c4c4c4"></div>
<div class="a" style="left:363px;top:725px;width:3px;height:1px;background:#c4c4c4"></div>
<div class="a" style="left:335px;top:743px;width:3px;height:1px;background:#c4c4c4"></div>
<div class="a" style="left:363px;top:743px;width:3px;height:1px;background:#c4c4c4"></div>
<div class="a" style="left:335px;top:761px;width:3px;height:1px;background:#c4c4c4"></div>
<div class="a" style="left:363px;top:761px;width:3px;height:1px;background:#c4c4c4"></div>
<div class="a" style="left:335px;top:778px;width:3px;height:1px;background:#c4c4c4"></div>
<div class="a" style="left:363px;top:778px;width:3px;height:1px;background:#c4c4c4"></div>
<div class="a" style="left:335px;top:796px;width:3px;height:1px;background:#c4c4c4"></div>
<div class="a" style="left:363px;top:796px;width:3px;height:1px;background:#c4c4c4"></div>
<div class="a" style="left:335px;top:814px;width:3px;height:1px;background:#c4c4c4"></div>
<div class="a" style="left:363px;top:814px;width:3px;height:1px;background:#c4c4c4"></div>
<div class="a" style="left:335px;top:832px;width:3px;height:1px;background:#c4c4c4"></div>
<div class="a" style="left:363px;top:832px;width:3px;height:1px;background:#c4c4c4"></div>
<div class="a" style="left:335px;top:850px;width:3px;height:1px;background:#c4c4c4"></div>
<div class="a" style="left:363px;top:850px;width:3px;height:1px;background:#c4c4c4"></div>
<div class="a" style="left:335px;top:867px;width:3px;height:1px;background:#c4c4c4"></div>
<div class="a" style="left:363px;top:867px;width:3px;height:1px;background:#c4c4c4"></div>
<div class="a" style="left:335px;top:885px;width:3px;height:1px;background:#c4c4c4"></div>
<div class="a" style="left:363px;top:885px;width:3px;height:1px;background:#c4c4c4"></div>
<div class="a" style="left:335px;top:903px;width:3px;height:1px;background:#c4c4c4"></div>
<div class="a" style="left:363px;top:903px;width:3px;height:1px;background:#c4c4c4"></div>
<div class="a" style="left:395px;top:720px;width:4px;height:188px;background:#e7eaea;border:1px solid #d6d6d6"></div>
<div class="a" style="left:386px;top:898px;width:21px;height:10px;background:#0078d7"></div>
<div class="a" style="left:381px;top:725px;width:3px;height:1px;background:#c4c4c4"></div>
<div class="a" style="left:409px;top:725px;width:3px;height:1px;background:#c4c4c4"></div>
<div class="a" style="left:381px;top:743px;width:3px;height:1px;background:#c4c4c4"></div>
<div class="a" style="left:409px;top:743px;width:3px;height:1px;background:#c4c4c4"></div>
<div class="a" style="left:381px;top:761px;width:3px;height:1px;background:#c4c4c4"></div>
<div class="a" style="left:409px;top:761px;width:3px;height:1px;background:#c4c4c4"></div>
<div class="a" style="left:381px;top:778px;width:3px;height:1px;background:#c4c4c4"></div>
<div class="a" style="left:409px;top:778px;width:3px;height:1px;background:#c4c4c4"></div>
<div class="a" style="left:381px;top:796px;width:3px;height:1px;background:#c4c4c4"></div>
<div class="a" style="left:409px;top:796px;width:3px;height:1px;background:#c4c4c4"></div>
<div class="a" style="left:381px;top:814px;width:3px;height:1px;background:#c4c4c4"></div>
<div class="a" style="left:409px;top:814px;width:3px;height:1px;background:#c4c4c4"></div>
<div class="a" style="left:381px;top:832px;width:3px;height:1px;background:#c4c4c4"></div>
<div class="a" style="left:409px;top:832px;width:3px;height:1px;background:#c4c4c4"></div>
<div class="a" style="left:381px;top:850px;width:3px;height:1px;background:#c4c4c4"></div>
<div class="a" style="left:409px;top:850px;width:3px;height:1px;background:#c4c4c4"></div>
<div class="a" style="left:381px;top:867px;width:3px;height:1px;background:#c4c4c4"></div>
<div class="a" style="left:409px;top:867px;width:3px;height:1px;background:#c4c4c4"></div>
<div class="a" style="left:381px;top:885px;width:3px;height:1px;background:#c4c4c4"></div>
<div class="a" style="left:409px;top:885px;width:3px;height:1px;background:#c4c4c4"></div>
<div class="a" style="left:381px;top:903px;width:3px;height:1px;background:#c4c4c4"></div>
<div class="a" style="left:409px;top:903px;width:3px;height:1px;background:#c4c4c4"></div>
<div class="btn ms" style="left:424px;top:716px;width:34px;height:115px;line-height:113px;letter-spacing:-.4px;background:#cccccc;border-color:#bfbfbf;color:#a0a0a0;line-height:13px;padding-top:43px">ope<br>n</div>
<div class="btn ms" style="left:424px;top:839px;width:34px;height:74px;line-height:72px;letter-spacing:-.4px;background:#cccccc;border-color:#bfbfbf;color:#a0a0a0;line-height:13px;padding-top:24px">clos<br>e</div>
<div class="btn ms" style="left:466px;top:716px;width:46px;height:115px;line-height:113px;letter-spacing:-.4px;border:2px solid #0078d7">Lumos</div>
<div class="btn ms" style="left:466px;top:839px;width:46px;height:74px;line-height:72px;letter-spacing:-.4px;">Nox</div>
<div class="t ms c" style="left:228.67px;width:200px;top:921px;letter-spacing:-0.666px;">Dimmer</div>
<div class="t ms c" style="left:295.82px;width:200px;top:921px;letter-spacing:-0.368px;">Strobe</div>
<div class="t ms c" style="left:339.77px;width:200px;top:917px;letter-spacing:-0.457px;">Shutt</div>
<div class="t ms c" style="left:387.86px;width:200px;top:921px;letter-spacing:-0.285px;">Intensity</div>
<div class="hdr" style="left:520px;top:694px;width:224px"></div><div class="t ui" style="left:526px;top:697px;letter-spacing:0.014px;color:#3e4d60">Position</div><svg class="a" style="left:713px;top:699px" width="7" height="10" viewBox="0 0 7 10"><path d="M1.5 0 V6 M4.5 0 V6 M1 .5 H5 M0 6 H7 M3.5 6 V10" stroke="#2d3640" stroke-width="1" fill="none"/><path d="M4 0 H5.5 V6 H4Z" fill="#2d3640"/></svg><svg class="a" style="left:729px;top:700px" width="9" height="8" viewBox="0 0 9 8"><path d="M.5 .5 L8.5 7.5 M8.5 .5 L.5 7.5" stroke="#2d3640" stroke-width="1.3" fill="none"/></svg>
<div class="a" style="left:526px;top:718px;width:189px;height:189px;border:1px solid #d0d0d0"></div>
<div class="a" style="left:620px;top:718px;width:1px;height:189px;background:#d0d0d0"></div>
<div class="a" style="left:526px;top:812px;width:189px;height:1px;background:#d0d0d0"></div>
<div class="a" style="left:612px;top:804px;width:17px;height:17px;background:#d6d6d6;border-radius:50%"></div>
<div class="a" style="left:726px;top:718px;width:4px;height:189px;background:#e7eaea;border:1px solid #d6d6d6"></div>
<svg class="a" style="left:723px;top:809px" width="12" height="8" viewBox="0 0 12 8"><path d="M0 0 H8 L11.5 3.75 L8 7.5 H0Z" fill="#cdcdcd"/></svg>
<div class="a" style="left:737px;top:721px;width:4px;height:1px;background:#c8c8c8"></div>
<div class="a" style="left:737px;top:739px;width:4px;height:1px;background:#c8c8c8"></div>
<div class="a" style="left:737px;top:758px;width:4px;height:1px;background:#c8c8c8"></div>
<div class="a" style="left:737px;top:776px;width:4px;height:1px;background:#c8c8c8"></div>
<div class="a" style="left:737px;top:794px;width:4px;height:1px;background:#c8c8c8"></div>
<div class="a" style="left:737px;top:812px;width:4px;height:1px;background:#c8c8c8"></div>
<div class="a" style="left:737px;top:831px;width:4px;height:1px;background:#c8c8c8"></div>
<div class="a" style="left:737px;top:849px;width:4px;height:1px;background:#c8c8c8"></div>
<div class="a" style="left:737px;top:867px;width:4px;height:1px;background:#c8c8c8"></div>
<div class="a" style="left:737px;top:886px;width:4px;height:1px;background:#c8c8c8"></div>
<div class="a" style="left:737px;top:904px;width:4px;height:1px;background:#c8c8c8"></div>
<div class="a" style="left:526px;top:918px;width:189px;height:4px;background:#e7eaea;border:1px solid #d6d6d6"></div>
<svg class="a" style="left:617px;top:915px" width="8" height="12" viewBox="0 0 8 12"><path d="M0 0 H7.5 V8 L3.75 11.5 L0 8Z" fill="#cdcdcd"/></svg>
<div class="a" style="left:529px;top:929px;width:1px;height:4px;background:#c8c8c8"></div>
<div class="a" style="left:547px;top:929px;width:1px;height:4px;background:#c8c8c8"></div>
<div class="a" style="left:566px;top:929px;width:1px;height:4px;background:#c8c8c8"></div>
<div class="a" style="left:584px;top:929px;width:1px;height:4px;background:#c8c8c8"></div>
<div class="a" style="left:602px;top:929px;width:1px;height:4px;background:#c8c8c8"></div>
<div class="a" style="left:620px;top:929px;width:1px;height:4px;background:#c8c8c8"></div>
<div class="a" style="left:639px;top:929px;width:1px;height:4px;background:#c8c8c8"></div>
<div class="a" style="left:657px;top:929px;width:1px;height:4px;background:#c8c8c8"></div>
<div class="a" style="left:675px;top:929px;width:1px;height:4px;background:#c8c8c8"></div>
<div class="a" style="left:694px;top:929px;width:1px;height:4px;background:#c8c8c8"></div>
<div class="a" style="left:712px;top:929px;width:1px;height:4px;background:#c8c8c8"></div>
<div class="hdr" style="left:749px;top:694px;width:236px"></div><div class="t ui" style="left:755px;top:697px;letter-spacing:-0.075px;color:#3e4d60">Color</div><svg class="a" style="left:954px;top:699px" width="7" height="10" viewBox="0 0 7 10"><path d="M1.5 0 V6 M4.5 0 V6 M1 .5 H5 M0 6 H7 M3.5 6 V10" stroke="#2d3640" stroke-width="1" fill="none"/><path d="M4 0 H5.5 V6 H4Z" fill="#2d3640"/></svg><svg class="a" style="left:970px;top:700px" width="9" height="8" viewBox="0 0 9 8"><path d="M.5 .5 L8.5 7.5 M8.5 .5 L.5 7.5" stroke="#2d3640" stroke-width="1.3" fill="none"/></svg>
<div class="a" style="left:751px;top:712px;width:42px;height:21px;background:#f7f7f7;border:1px solid #696969;border-right-color:#fff;border-bottom-color:#fff;box-shadow:inset 1px 1px 0 #a0a0a0"></div>
<div class="t ui" style="left:758px;top:716px;letter-spacing:-0.958px;">HSV</div>
<div class="a" style="left:785px;top:742px;width:139px;height:137px;border-radius:50%;background:radial-gradient(closest-side,#fff 0,rgba(255,255,255,0) 100%),conic-gradient(#0ff,#0f0 60deg,#ff0 120deg,#f00 180deg,#f0f 240deg,#00f 300deg,#0ff)"></div>
<div class="a" style="left:849px;top:806px;width:11px;height:11px;background:#fff;border:1px solid #000;border-radius:50%"></div>
<div class="a" style="left:938px;top:742px;width:4px;height:132px;background:#e7eaea;border:1px solid #d6d6d6"></div>
<svg class="a" style="left:936px;top:868px" width="10" height="6" viewBox="0 0 10 6"><path d="M0 0 H7 L10 3 L7 6 H0Z" fill="#0078d7"/></svg>
<div class="a" style="left:948px;top:745px;width:3px;height:1px;background:#c8c8c8"></div>
<div class="a" style="left:948px;top:758px;width:3px;height:1px;background:#c8c8c8"></div>
<div class="a" style="left:948px;top:770px;width:3px;height:1px;background:#c8c8c8"></div>
<div class="a" style="left:948px;top:783px;width:3px;height:1px;background:#c8c8c8"></div>
<div class="a" style="left:948px;top:795px;width:3px;height:1px;background:#c8c8c8"></div>
<div class="a" style="left:948px;top:808px;width:3px;height:1px;background:#c8c8c8"></div>
<div class="a" style="left:948px;top:821px;width:3px;height:1px;background:#c8c8c8"></div>
<div class="a" style="left:948px;top:833px;width:3px;height:1px;background:#c8c8c8"></div>
<div class="a" style="left:948px;top:846px;width:3px;height:1px;background:#c8c8c8"></div>
<div class="a" style="left:948px;top:858px;width:3px;height:1px;background:#c8c8c8"></div>
<div class="a" style="left:948px;top:871px;width:3px;height:1px;background:#c8c8c8"></div>
<div class="a" style="left:785px;top:891px;width:133px;height:4px;background:#e7eaea;border:1px solid #d6d6d6"></div>
<svg class="a" style="left:784px;top:886px" width="8" height="13" viewBox="0 0 8 13"><path d="M0 0 H8 V9 L4 13 L0 9Z" fill="#0078d7"/></svg>
<div class="a" style="left:788px;top:903px;width:1px;height:3px;background:#c8c8c8"></div>
<div class="a" style="left:801px;top:903px;width:1px;height:3px;background:#c8c8c8"></div>
<div class="a" style="left:813px;top:903px;width:1px;height:3px;background:#c8c8c8"></div>
<div class="a" style="left:826px;top:903px;width:1px;height:3px;background:#c8c8c8"></div>
<div class="a" style="left:838px;top:903px;width:1px;height:3px;background:#c8c8c8"></div>
<div class="a" style="left:851px;top:903px;width:1px;height:3px;background:#c8c8c8"></div>
<div class="a" style="left:864px;top:903px;width:1px;height:3px;background:#c8c8c8"></div>
<div class="a" style="left:876px;top:903px;width:1px;height:3px;background:#c8c8c8"></div>
<div class="a" style="left:889px;top:903px;width:1px;height:3px;background:#c8c8c8"></div>
<div class="a" style="left:901px;top:903px;width:1px;height:3px;background:#c8c8c8"></div>
<div class="a" style="left:914px;top:903px;width:1px;height:3px;background:#c8c8c8"></div>
<div class="a" style="left:749px;top:917px;width:236px;height:20px;background:#e2e2e2"></div><div class="a" style="left:749px;top:916px;width:1px;height:1px;background:#707070"></div><div class="a" style="left:806px;top:916px;width:179px;height:1px;background:#707070"></div><svg class="a" style="left:749px;top:915px" width="58" height="23" viewBox="0 0 58 23"><path d="M.5 0 V18.5 Q.5 21.5 3.5 21.5 H52.5 Q56.5 21.5 56.5 17.5 V0" fill="#f0f0f0" stroke="#6e6e6e"/></svg>
<div class="a" style="left:751px;top:918px;width:15px;height:15px;border-radius:50%;background:radial-gradient(closest-side,#fff 5%,rgba(255,255,255,0) 75%),conic-gradient(from 270deg,#f00,#ff0,#0f0,#0ff,#00f,#f0f,#f00)"></div>
<div class="t ui" style="left:770px;top:919px;letter-spacing:-0.075px;">Color</div>
<svg class="a" style="left:808px;top:918px;" width="16" height="16" viewBox="0 0 16 16"><circle cx="8" cy="8" r="7.9" fill="#000"/><circle cx="6" cy="4.4" r="2.1" fill="#fff"/><circle cx="12" cy="8.2" r="2.1" fill="#fff"/><circle cx="6" cy="12" r="2.1" fill="#fff"/></svg>
<div class="t ui" style="left:827px;top:919px;letter-spacing:-0.414px;color:#6d6d6d">Gobo</div>
<div class="a" style="left:863px;top:919px;width:1px;height:14px;background:#8c8c8c"></div>
<svg class="a" style="left:865px;top:918px;" width="14" height="15" viewBox="0 0 16 16"><ellipse cx="8" cy="8" rx="6.4" ry="7.4" fill="#e6eef5" stroke="#2b2b2b" stroke-width="1.6"/><path d="M4.2 5.5 C5 3.2 7 2.2 9 2.6" stroke="#fff" stroke-width="1.2" fill="none"/></svg>
<div class="t ui" style="left:884px;top:919px;letter-spacing:-0.680px;color:#6d6d6d">Lens</div>
<div class="a" style="left:915px;top:919px;width:1px;height:14px;background:#8c8c8c"></div>
<div class="hdr" style="left:989px;top:694px;width:290px"></div><div class="t ui" style="left:995px;top:697px;letter-spacing:-0.233px;color:#3e4d60">Effects and Filters</div><svg class="a" style="left:1248px;top:699px" width="7" height="10" viewBox="0 0 7 10"><path d="M1.5 0 V6 M4.5 0 V6 M1 .5 H5 M0 6 H7 M3.5 6 V10" stroke="#2d3640" stroke-width="1" fill="none"/><path d="M4 0 H5.5 V6 H4Z" fill="#2d3640"/></svg><svg class="a" style="left:1264px;top:700px" width="9" height="8" viewBox="0 0 9 8"><path d="M.5 .5 L8.5 7.5 M8.5 .5 L.5 7.5" stroke="#2d3640" stroke-width="1.3" fill="none"/></svg>
<div class="a" style="left:989px;top:712px;width:290px;height:38px;background:#fcfcfc"></div>
<div class="a" style="left:991px;top:712px;width:193px;height:38px;background:linear-gradient(#fdfdfd,#f9f9f9 60%,#f3f3f3);border-radius:0 0 3px 0"></div>
<div class="a" style="left:994px;top:717px;width:2px;height:26px;background:repeating-linear-gradient(#f8f8f8 0 2px,#a5a5a5 2px 4px)"></div>
<svg class="a" style="left:1008px;top:715px;" width="16" height="16" viewBox="0 0 16 16"><rect x="2.5" y="2.5" width="11" height="13" fill="#d9d9d9" stroke="#b5b5b5"/><rect x="5.5" y=".8" width="5" height="3" fill="#cfcfcf" stroke="#b0b0b0" stroke-width=".7"/><path d="M6 7 l1.5 1.5 l2.5 -3 M6.5 11.5h3" stroke="#f1f1f1" stroke-width="1.1" fill="none"/></svg>
<div class="t ui c" style="left:915.73px;width:200px;top:732px;letter-spacing:-0.545px;color:#8d8d8d">Edit</div>
<svg class="a" style="left:1050px;top:715px;" width="16" height="16" viewBox="0 0 16 16"><path d="M2 2 L13 .8 L14.5 13 L5.5 15.3Z" fill="#d9d9d9" stroke="#b8b8b8" stroke-width=".8"/><path d="M2 2 L3 .5 M4.5 1.8 L5.2 .4 M7 1.5 L7.6 .2 M9.5 1.2 L10 0 M12 1 L12.4 0" stroke="#b0b0b0" stroke-width=".9"/><path d="M5.5 6 L11.5 5.2 M6 9 L12 8.2" stroke="#ececec" stroke-width="1"/></svg>
<div class="t ui c" style="left:957.78px;width:200px;top:732px;letter-spacing:-0.443px;color:#8d8d8d">Rename</div>
<svg class="a" style="left:1099px;top:715px;" width="16" height="16" viewBox="0 0 16 16"><path d="M2 3.8 L4.3 1.5 L8 5.2 L11.7 1.5 L14 3.8 L10.3 7.8 L14 11.8 L11.7 14.2 L8 10.4 L4.3 14.2 L2 11.8 L5.7 7.8Z" fill="#9b9b9b"/></svg>
<div class="t ui c" style="left:1006.80px;width:200px;top:732px;letter-spacing:-0.398px;color:#8d8d8d">Delete</div>
<svg class="a" style="left:1142px;top:715px;" width="16" height="16" viewBox="0 0 16 16"><path d="M2 4 L6 1.5 L13.5 2 L14.5 8 L10 9.5 L8.5 13.5 L6.5 13.5 L7 9 L3 9Z" fill="#c9c9c9" stroke="#b0b0b0" stroke-width=".7"/><path d="M3 10 L6 10 L5.5 14.5 L4 14.5Z" fill="#bdbdbd"/></svg>
<div class="t ui c" style="left:1050.10px;width:200px;top:732px;letter-spacing:0.197px;color:#8d8d8d">Apply</div>
<div class="dd" style="left:1171px;top:728px;border-top-color:#8d8d8d"></div>
<div class="a" style="left:1183px;top:718px;width:1px;height:28px;background:#c9c9c9"></div>
<div class="a" style="left:1034px;top:752px;width:70px;height:19px;background:#f0f0f0;border:1px solid #d9d9d9"></div>
<div class="a" style="left:1103px;top:752px;width:42px;height:19px;background:#f0f0f0;border:1px solid #d9d9d9"></div>
<div class="a" style="left:990px;top:750px;width:45px;height:22px;background:#fff;border:1px solid #d9d9d9;border-bottom:none"></div>
<div class="a" style="left:990px;top:770px;width:287px;height:144px;background:#fff;border:1px solid #d9d9d9;border-bottom:none"></div>
<div class="a" style="left:991px;top:769px;width:43px;height:3px;background:#fff"></div>
<div class="t ms" style="left:997px;top:753px;letter-spacing:-0.288px;">Effect</div>
<div class="t ms" style="left:1039px;top:755px;letter-spacing:-0.279px;">Matrix Effect</div>
<div class="t ms" style="left:1110px;top:755px;letter-spacing:-0.298px;">Saved</div>
<div class="a" style="left:996px;top:775px;width:276px;height:134px;background:#fff;border:1px solid #828790"></div>
<div class="a" style="left:1254px;top:776px;width:17px;height:132px;background:#f0f0f0"></div>
<div class="a" style="left:1254px;top:794px;width:16px;height:39px;background:#cdcdcd"></div>
<svg class="a" style="left:1258px;top:783px" width="9" height="6" viewBox="0 0 9 6"><path d="M.7 5 L4.5 1.2 L8.3 5" stroke="#3c3c3c" stroke-width="1.6" fill="none"/></svg>
<svg class="a" style="left:1258px;top:896px" width="9" height="6" viewBox="0 0 9 6"><path d="M.7 1 L4.5 4.8 L8.3 1" stroke="#3c3c3c" stroke-width="1.6" fill="none"/></svg>
<div class="a" style="left:997px;top:776px;width:256px;height:132px;overflow:hidden">
<svg class="a" style="left:30px;top:4px" width="25" height="23" viewBox="0 0 25 23"><path d="M1 22 C3 12 5 1 7.5 1 C10 1 11 12 12 21 C13 12 15 1 18 1 C21 1 23 10 24 16" fill="none" stroke="#111" stroke-width="1.1"/></svg>
<div class="t ms c" style="left:-58.48px;width:200px;top:30px;letter-spacing:-0.959px;">Bump</div>
<svg class="a" style="left:116px;top:4px" width="25" height="23" viewBox="0 0 25 23"><path d="M21.8 9.5 A10 10 0 1 0 21.8 13.5" fill="none" stroke="#111" stroke-width="1.1"/></svg>
<div class="t ms c" style="left:27.79px;width:200px;top:30px;letter-spacing:-0.419px;">Circle</div>
<svg class="a" style="left:200px;top:4px" width="25" height="23" viewBox="0 0 25 23"><path d="M1 21.5 C2 15 2 2 4 1.2 C5 .8 7 .8 8 1.5 C9.5 3 8.5 20.5 10 20.5 L12.5 20.5 C14 20.5 13 3 15 1.3 C16 .8 18.5 .8 19.5 1.5 C21 3 20 20.5 21.5 20.5 L24.5 20.5" fill="none" stroke="#111" stroke-width="1.1"/></svg>
<div class="t ms c" style="left:111.86px;width:200px;top:30px;letter-spacing:-0.275px;">Capacitor</div>
<svg class="a" style="left:30px;top:49px" width="25" height="23" viewBox="0 0 25 23"><path d="M1 18 L2.5 20 L4 16 L5 21 L7.5 1 L9.5 21 L11 17 L12 20 L13.5 17 L14.5 20 L16 17 L18 1 L20 21 L21.5 16 L23 20 L24 17" fill="none" stroke="#111" stroke-width="1.1"/></svg>
<div class="t ms c" style="left:-58.21px;width:200px;top:75px;letter-spacing:-0.419px;">Cardinalsinus</div>
<svg class="a" style="left:116px;top:49px" width="25" height="23" viewBox="0 0 25 23"><path d="M21 1 H1.5 V21.5 H21.5 V5" fill="none" stroke="#111" stroke-width="1.1"/></svg>
<div class="t ms c" style="left:27.82px;width:200px;top:75px;letter-spacing:-0.364px;">Polygon</div>
<svg class="a" style="left:200px;top:49px" width="25" height="23" viewBox="0 0 25 23"><path d="M12 .8 L19 2.5 L23.2 8.5 L22.5 15.5 L17 21 L9.5 21.5 L3 17.5 L1 11 L4 4.5 Z M9 7 L15.5 6 L18.5 11.5 L14 16 L8 13.5 Z M9 7 L4 4.5 M9 7 L12 .8 M15.5 6 L19 2.5 M18.5 11.5 L23.2 8.5 M18.5 11.5 L22.5 15.5 M14 16 L17 21 M14 16 L9.5 21.5 M8 13.5 L3 17.5 M8 13.5 L1 11" fill="none" stroke="#111" stroke-width="1.1"/></svg>
<div class="t ms c" style="left:111.83px;width:200px;top:75px;letter-spacing:-0.331px;">Epizykloide</div>
<svg class="a" style="left:30px;top:94px" width="25" height="23" viewBox="0 0 25 23"><path d="M1 1 C4 6 14 10 23 11 C14 12 5 16 1 22 C4 15 4 8 1 1Z" fill="none" stroke="#111" stroke-width="1.1"/></svg>
<div class="t ms c" style="left:-58.18px;width:200px;top:120px;letter-spacing:-0.351px;">Hypozykloide</div>
<svg class="a" style="left:116px;top:94px" width="25" height="23" viewBox="0 0 25 23"><path d="M1 10 C1 1 6 -2 7.5 8 C9 20 11 24 13 14 C14.5 4 17 -2 19 8 C20.5 18 22 24 24 19" fill="none" stroke="#111" stroke-width="1.1"/></svg>
<div class="t ms c" style="left:27.76px;width:200px;top:120px;letter-spacing:-0.475px;">Pows</div>
<svg class="a" style="left:200px;top:94px" width="25" height="23" viewBox="0 0 25 23"><path d="M12 11 C14 4 16.5 1 19 1 C23.5 1 23.5 21 19 21 C16.5 21 14 18 12 11 C10 4 7.5 1 5 1 C.5 1 .5 21 5 21 C7 21 8.5 19 9.5 17" fill="none" stroke="#111" stroke-width="1.1"/></svg>
<div class="t ms c" style="left:111.75px;width:200px;top:120px;letter-spacing:-0.495px;">Lissajous</div>
</div>
<div class="a" style="left:989px;top:917px;width:290px;height:20px;background:#e2e2e2"></div><div class="a" style="left:989px;top:916px;width:66px;height:1px;background:#707070"></div><div class="a" style="left:1174px;top:916px;width:105px;height:1px;background:#707070"></div><svg class="a" style="left:1054px;top:915px" width="121" height="23" viewBox="0 0 121 23"><path d="M.5 0 V18.5 Q.5 21.5 3.5 21.5 H115.5 Q119.5 21.5 119.5 17.5 V0" fill="#f0f0f0" stroke="#6e6e6e"/></svg>
<svg class="a" style="left:992px;top:918px;" width="14" height="15" viewBox="0 0 16 16"><rect x=".5" y=".5" width="14" height="15" fill="#f7f7f7" stroke="#8a96a3"/><rect x="2" y="2" width="5" height="5.5" fill="#3c8fe6"/><path d="M8.5 3h4" stroke="#d33" stroke-width="1.3"/><path d="M8.5 6h4" stroke="#444" stroke-width="1.3"/><path d="M2 9.5h5" stroke="#3a3" stroke-width="1.3"/><path d="M8.5 9.5h4" stroke="#e8c020" stroke-width="1.3"/><path d="M2 12.5h5" stroke="#d33" stroke-width="1.3"/><path d="M8.5 12.5h4" stroke="#36c" stroke-width="1.3"/></svg>
<div class="t ui" style="left:1010px;top:919px;letter-spacing:-0.583px;color:#6d6d6d">Presets</div>
<svg class="a" style="left:1057px;top:918px;" width="14" height="15" viewBox="0 0 16 16"><path d="M10.5 .5 L15 1.5 L9.5 8 L12.5 8.5 L2 15.5 L6.5 9.5 L3.5 9 Z" fill="#f2b632" stroke="#b57d12" stroke-width=".7"/><path d="M1 13 L5 9" stroke="#d9c38a" stroke-width="1.5"/></svg>
<div class="t ui" style="left:1075px;top:919px;letter-spacing:-0.233px;">Effects and Filters</div>
<div class="a" style="left:1px;top:937px;width:1278px;height:1px;background:#cdcdcd"></div>
<svg class="a" style="left:1244px;top:941px;" width="16" height="16" viewBox="0 0 16 16"><defs><linearGradient id="sg" x1="0" y1="0" x2="1" y2="1"><stop offset="0" stop-color="#8ea4b8"/><stop offset="1" stop-color="#4f667c"/></linearGradient></defs><path d="M10 1.2 L13.2 1.2 L13.2 13.5 L10 14.5Z" fill="#e6e6e6" stroke="#8a8a8a" stroke-width=".4"/><rect x="11" y="3.8" width="2.6" height="2.6" fill="#2b9be8"/><rect x="11.2" y="6.8" width="3" height="3.6" rx="1" fill="#f2d21a"/><rect x="11.2" y="10.8" width="3" height="3.2" rx=".8" fill="#b23aa8"/><path d="M.6 1 Q.6 .4 1.4 .4 L12 .4 L12 2 L11 2 L11 15.6 L1.2 13.6 Q.6 13.4 .6 12.6Z" fill="url(#sg)" stroke="#3b4b5b" stroke-width=".6"/><path d="M1.4 .8 L12 .8 L12 1.8 L2 1.8Z" fill="#eef2f5"/><path d="M3 6.2 L8.8 5 L8.8 6.6 L3 7.8Z" fill="#3c4e60"/></svg>
<svg class="a" style="left:1266px;top:946px" width="10" height="10" viewBox="0 0 10 10"><g fill="#bdbdbd"><rect x="8" y="0" width="2" height="2"/><rect x="4" y="4" width="2" height="2"/><rect x="8" y="4" width="2" height="2"/><rect x="0" y="8" width="2" height="2"/><rect x="4" y="8" width="2" height="2"/><rect x="8" y="8" width="2" height="2"/></g></svg>
</body></html>
